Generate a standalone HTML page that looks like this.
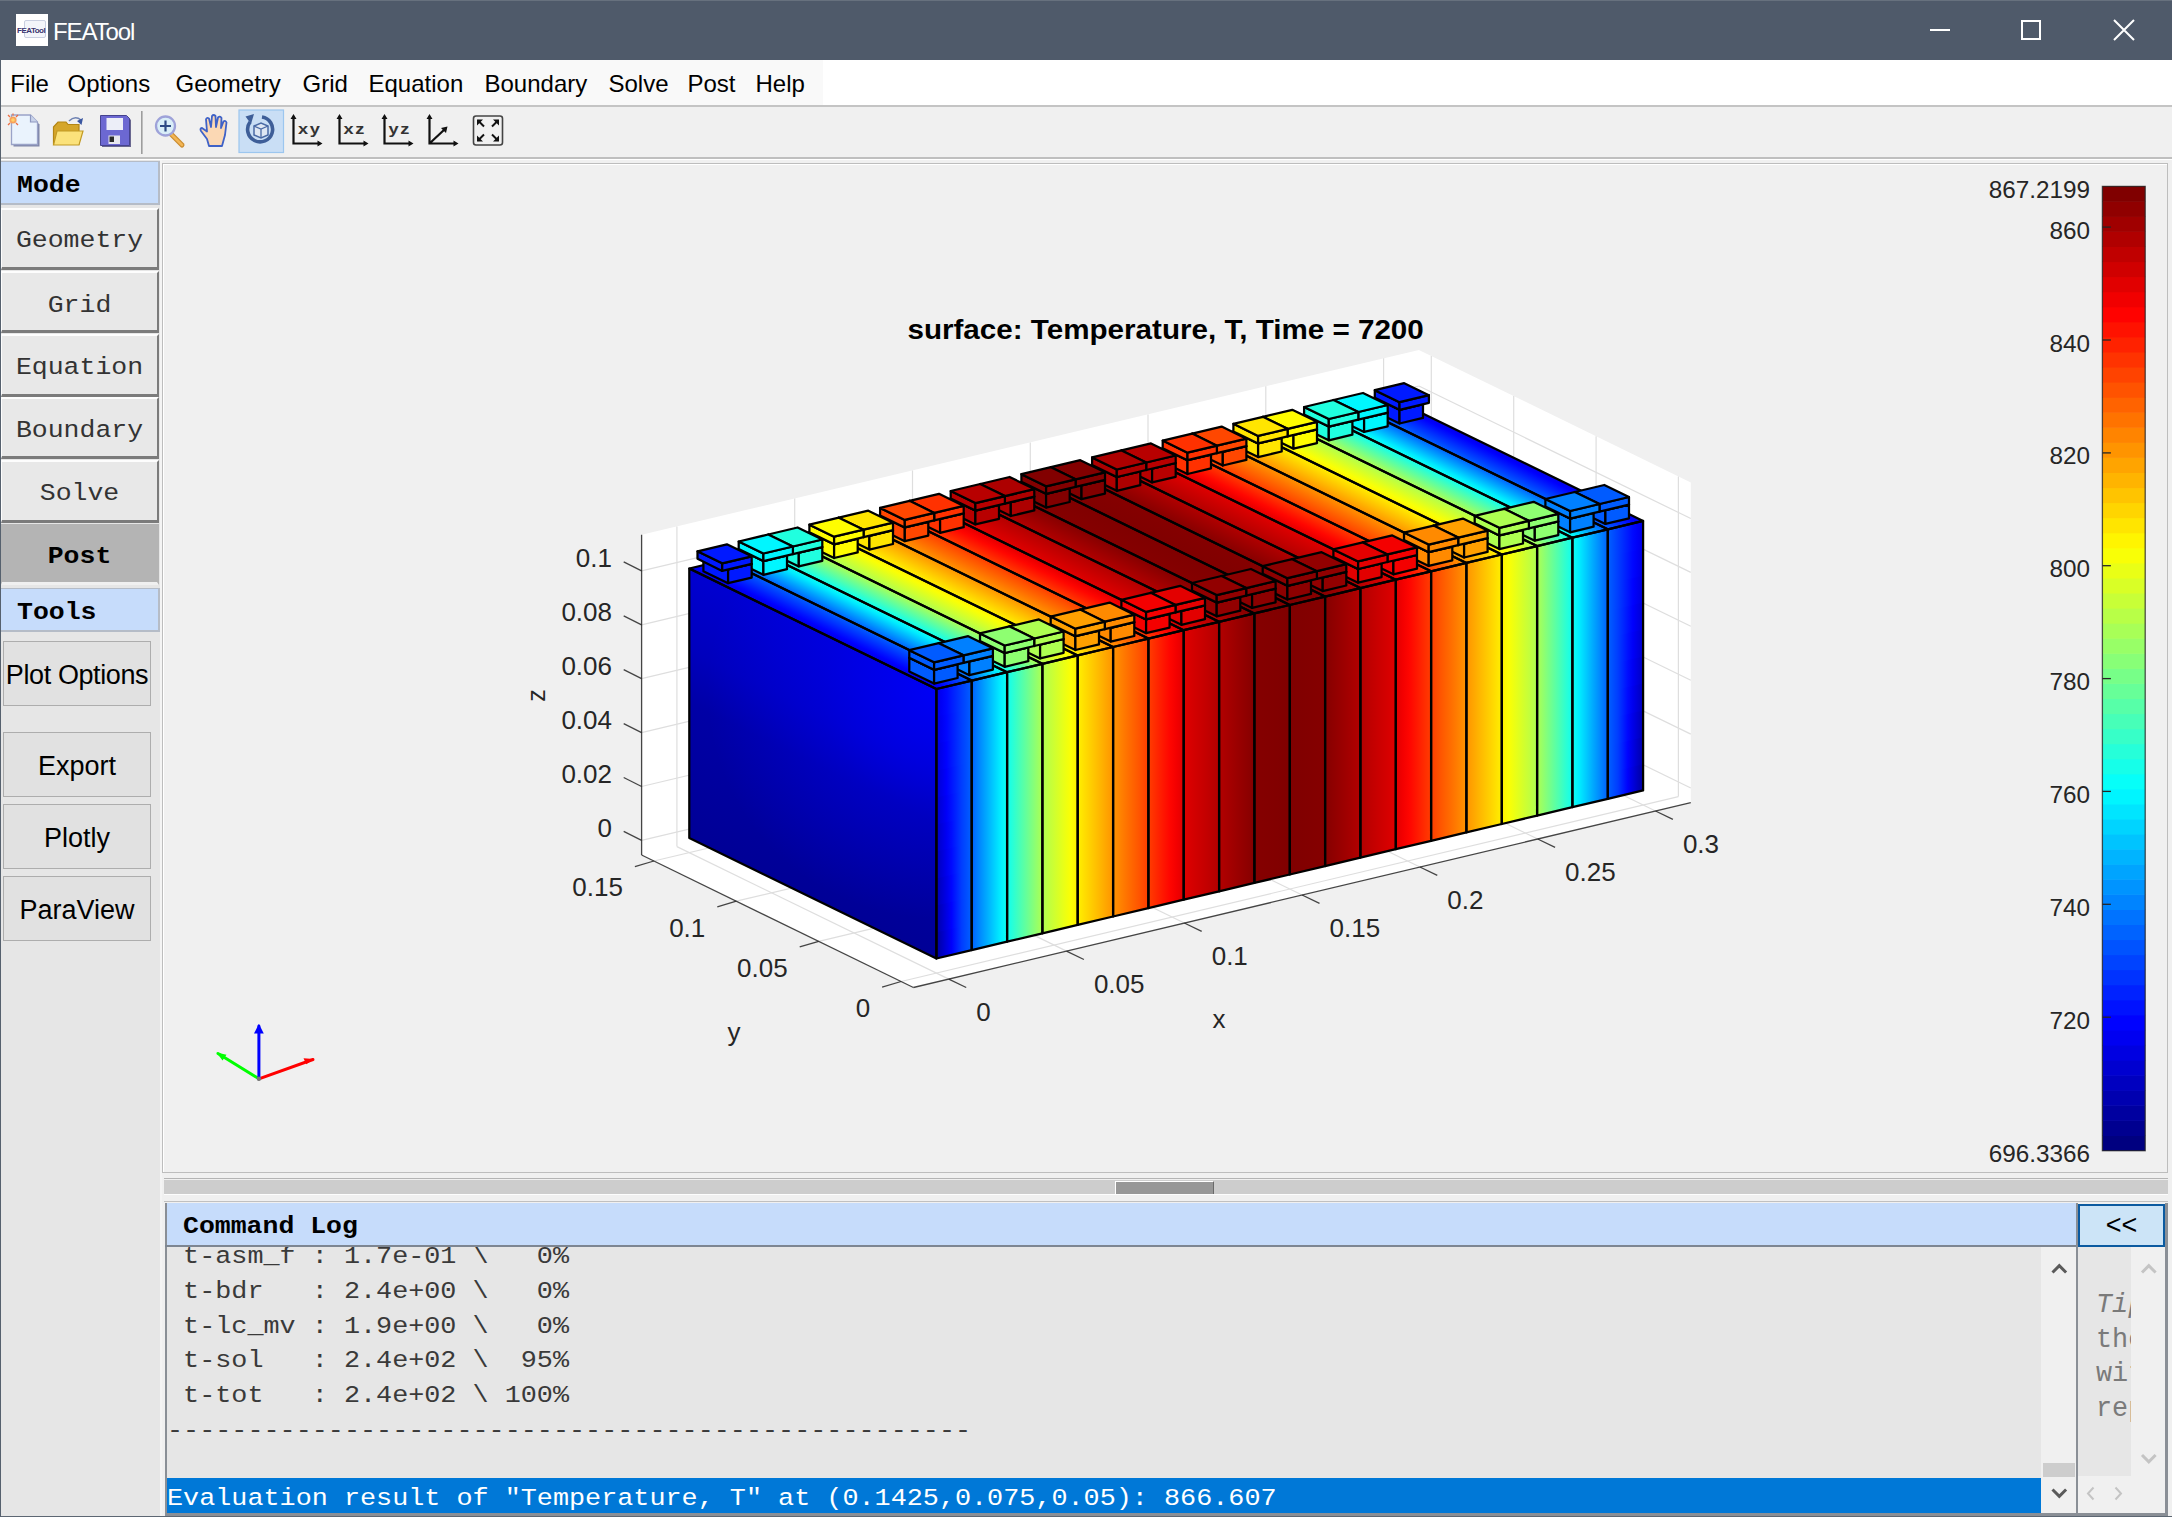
<!DOCTYPE html>
<html><head><meta charset="utf-8"><style>
html,body{margin:0;padding:0}
body{width:2172px;height:1517px;overflow:hidden;background:#f0f0f0;position:relative;font-family:"Liberation Sans",sans-serif}
.a{position:absolute}
.mono{font-family:"Liberation Mono",monospace}
.lg{left:0;font-size:26.8px;line-height:34.7px;height:34.7px;color:#3a3a3a;white-space:pre;transform:scaleY(0.87);transform-origin:0 24.5px}
#tb{left:0;top:0;width:2172px;height:60px;background:#4f5a6a;border-top:1px solid #67717e;box-sizing:border-box}
#menu{left:0;top:60px;width:2172px;height:45px;background:#fff}
#menuL{left:1px;top:60px;width:822px;height:45px;background:#f9f9f9}
.mi{top:69.5px;font-size:24px;color:#000;white-space:nowrap}
#menuLine{left:0;top:105px;width:2172px;height:2px;background:#c4c4c4}
#tool{left:0;top:107px;width:2172px;height:51px;background:#f0f0f0}
#toolLine{left:0;top:157px;width:2172px;height:2px;background:#bfbfbf}
#toolLine2{left:0;top:159px;width:2172px;height:1px;background:#fff}
#lp{left:0;top:160px;width:161px;height:1357px;background:#e6e6e6}
.hdr{background:#c6dcfb;box-sizing:border-box;border-top:1px solid #b5bcc7;border-right:2px solid #b5bcc7;border-bottom:2px solid #b5bcc7}
.htx{font-family:"Liberation Mono",monospace;font-weight:bold;font-size:26.5px;line-height:34px;color:#000;transform:scaleY(0.88);transform-origin:0 24.5px}
.mb{padding-top:3px;left:1px;width:158px;box-sizing:border-box;background:#e8e8e8;border-top:2px solid #fdfdfd;border-left:1px solid #fdfdfd;border-right:2px solid #7b7b7b;border-bottom:3px solid #7b7b7b;font-family:"Liberation Mono",monospace;font-size:26.5px;color:#333;text-align:center}
.sy{display:inline-block;transform:scaleY(0.88)}
.tbtn{padding-top:2px;left:3px;width:148px;box-sizing:border-box;background:#e1e1e1;border:1px solid #adadad;font-size:27px;color:#000;text-align:center}
#plotBox{left:162px;top:163px;width:2006px;height:1010px;box-sizing:border-box;border:1px solid #bdbdbd;background:#f0f0f0}
#plotIn{left:163px;top:164px;width:2004px;height:1px;background:#fff}
#plotIn2{left:163px;top:164px;width:1px;height:1008px;background:#fff}
#spl{left:164px;top:1178px;width:2004px;height:24px}
#log{left:164px;top:1202px;width:2004px;height:315px;background:#f0f0f0}
</style></head><body>
<div class="a" id="tb"></div>

<div class="a" style="left:16px;top:14px;width:32px;height:32px;background:#fff">
 <div class="a" style="left:8px;top:6px;width:20px;height:16px;border:1px solid #c9cfe0;border-radius:2px;background:#f3f5fa"></div>
 <div class="a" style="left:5px;top:15px;width:23px;height:2px;background:#fff"></div>
 <div class="a" style="left:1px;top:12px;font:bold 8px 'Liberation Sans';color:#3a3570;letter-spacing:-0.5px">FEATool</div>
</div>
<div class="a" style="left:53px;top:18px;font-size:24px;color:#fff;letter-spacing:-1.1px">FEATool</div>
<div class="a" style="left:1930px;top:29px;width:20px;height:2px;background:#fff"></div>
<div class="a" style="left:2021px;top:20px;width:20px;height:20px;box-sizing:border-box;border:2px solid #fff"></div>
<svg class="a" style="left:2112px;top:18px" width="24" height="24"><path d="M2 2 L22 22 M22 2 L2 22" stroke="#fff" stroke-width="2"/></svg>

<div class="a" id="menu"></div>
<div class="a" id="menuL"></div>
<div class="a mi" style="left:10.3px">File</div>
<div class="a mi" style="left:67.5px">Options</div>
<div class="a mi" style="left:175.5px">Geometry</div>
<div class="a mi" style="left:302.5px">Grid</div>
<div class="a mi" style="left:368.5px">Equation</div>
<div class="a mi" style="left:484.5px">Boundary</div>
<div class="a mi" style="left:608.5px">Solve</div>
<div class="a mi" style="left:687.5px">Post</div>
<div class="a mi" style="left:755.5px">Help</div>
<div class="a" id="menuLine"></div>
<div class="a" id="tool"></div>
<div class="a" id="toolLine"></div>
<div class="a" id="toolLine2"></div>

<svg class="a" style="left:0;top:106px" width="520" height="51" viewBox="0 106 520 51">
<!-- new -->
<g>
<path d="M13.5 117 L32 117 L39.5 124.5 L39.5 146.5 L13.5 146.5 Z" fill="#7f86a8"/>
<path d="M11.5 115 L30.5 115 L37.5 122 L37.5 144.5 L11.5 144.5 Z" fill="#eaf3fd" stroke="#9aa3c8" stroke-width="1.3"/>
<path d="M30.5 115 L30.5 122 L37.5 122" fill="#c9d3ea" stroke="#8e98c0" stroke-width="1.2"/>
<circle cx="13" cy="120" r="3.6" fill="#f7a05a"/><circle cx="13" cy="120" r="1.8" fill="#ffd26a"/>
<path d="M8 115 L10 117 M18 115 L16 117 M8 125 L10 123 M18 125 L16 123 M13 113.5 L13 115.5" stroke="#ec6d40" stroke-width="1.3"/>
</g>
<!-- open -->
<g>
<path d="M53.5 127 L58 122 L66 122 L68 124.5 L79 124.5 L79 144 L53.5 144 Z" fill="#d5a62b" stroke="#b38514" stroke-width="1.2"/>
<path d="M57 131 L83 131 L79 145 L53.5 145 Z" fill="#fbe27b" stroke="#c29a24" stroke-width="1.2"/>
<path d="M69 121 Q75 115 81 120" fill="none" stroke="#6f83b3" stroke-width="1.6"/>
<path d="M83 118 L81.5 125 L77 121 Z" fill="#3a56a0"/>
</g>
<!-- save -->
<g>
<path d="M102 117 L128 117 L131 120 L131 147 L102 147 Z" fill="#6a6890"/>
<path d="M100.5 115.5 L126.5 115.5 L129.5 118.5 L129.5 145.5 L100.5 145.5 Z" fill="#6c68d2" stroke="#45438e" stroke-width="1"/>
<rect x="106.5" y="118" width="16.5" height="12" fill="#eceef8"/>
<rect x="108.5" y="135.5" width="11.5" height="8.5" fill="#e6e6ee"/>
<rect x="109.5" y="136.5" width="4.5" height="5.5" fill="#2a2a2a"/>
</g>
<rect x="141" y="111" width="1.6" height="43" fill="#9d9d9d"/>
<!-- zoom -->
<g>
<line x1="171" y1="134" x2="182" y2="145" stroke="#c98a2d" stroke-width="5" stroke-linecap="round"/>
<line x1="171" y1="134" x2="182" y2="145" stroke="#f2b554" stroke-width="2.6" stroke-linecap="round"/>
<circle cx="165.5" cy="126" r="9.5" fill="#d9eef8" stroke="#9ea2d9" stroke-width="2.3"/>
<path d="M160 126 L171 126 M165.5 120.5 L165.5 131.5" stroke="#2d4a84" stroke-width="2.2"/>
</g>
<!-- hand -->
<g>
<path d="M209 146 L207 139 L201 131 Q199.5 128.5 202 128 L207 131.5 L206 119.5 Q206.5 117 209 118.5 L211 127 L212 116 Q213.5 114 215.5 116 L216 127 L218 117.5 Q220 115.5 221.5 118 L221 128 L223.5 121.5 Q225.5 120 226.5 122.5 L225 135 L222 146 Z" fill="#fbd8b4" stroke="#3f62c7" stroke-width="1.8" stroke-linejoin="round"/>
</g>
<!-- rotate (highlight) -->
<rect x="239" y="110" width="44.5" height="42.5" fill="#c9def5" stroke="#9cc6ef" stroke-width="1.2"/>
<g>
<path d="M250 122 A12.5 12.5 0 1 0 262 117" fill="none" stroke="#3e5e98" stroke-width="3.6"/>
<path d="M245.5 116.5 L254 114 L251 124 Z" fill="#3e5e98"/>
<path d="M254 126 L261 123 L268 126 L268 135 L261 138 L254 135 Z" fill="#dfe7f3" stroke="#4a6aa5" stroke-width="1.5"/>
<path d="M254 126 L261 129 L268 126 M261 129 L261 138" fill="none" stroke="#4a6aa5" stroke-width="1.3"/>
</g>
<!-- axis icons -->
<g stroke="#111" stroke-width="2.2" fill="none">
<path d="M293.5 117 L293.5 143.5 L320 143.5"/>
<path d="M339.5 117 L339.5 143.5 L366 143.5"/>
<path d="M384.5 117 L384.5 143.5 L411 143.5"/>
<path d="M429.5 117 L429.5 143.5 L456 143.5 M429.5 143.5 L445 129"/>
</g>
<g fill="#111">
<path d="M293.5 114 L290.5 119 L296.5 119 Z M322.5 143.5 L317.5 140.5 L317.5 146.5 Z"/>
<path d="M339.5 114 L336.5 119 L342.5 119 Z M368.5 143.5 L363.5 140.5 L363.5 146.5 Z"/>
<path d="M384.5 114 L381.5 119 L387.5 119 Z M413.5 143.5 L408.5 140.5 L408.5 146.5 Z"/>
<path d="M429.5 114 L426.5 119 L432.5 119 Z M458.5 143.5 L453.5 140.5 L453.5 146.5 Z M447.5 126.5 L441 128 L446 133 Z"/>
</g>
<g font-family="Liberation Sans" font-weight="bold" font-size="14" fill="#333" letter-spacing="1.2">
<text x="298" y="134.5" transform="translate(298 0) scale(1.3 1) translate(-298 0)">xy</text>
<text x="343.5" y="134.5" transform="translate(343.5 0) scale(1.3 1) translate(-343.5 0)">xz</text>
<text x="388.5" y="134.5" transform="translate(388.5 0) scale(1.3 1) translate(-388.5 0)">yz</text>
</g>
<!-- fit -->
<rect x="473.5" y="116" width="29" height="29" rx="2.5" fill="none" stroke="#444" stroke-width="1.6"/>
<g stroke="#111" stroke-width="2" fill="none">
<path d="M478 120.5 L484 126.5 M498 120.5 L492 126.5 M478 140.5 L484 134.5 M498 140.5 L492 134.5"/>
</g>
<g fill="#111">
<path d="M477 119.5 L483 119.5 L477 125.5 Z M499 119.5 L493 119.5 L499 125.5 Z M477 141.5 L483 141.5 L477 135.5 Z M499 141.5 L493 141.5 L499 135.5 Z"/>
</g>
</svg>

<div class="a" id="lp"></div>
<div class="a hdr" style="left:1px;top:161px;width:159px;height:44px"><div class="a htx" style="left:16px;top:6px">Mode</div></div>
<div class="a mb" style="top:208px;height:62px;line-height:57px"><span class="sy">Geometry</span></div>
<div class="a mb" style="top:271px;height:62px;line-height:60px"><span class="sy">Grid</span></div>
<div class="a mb" style="top:334px;height:63px;line-height:58px"><span class="sy">Equation</span></div>
<div class="a mb" style="top:397px;height:62px;line-height:59px"><span class="sy">Boundary</span></div>
<div class="a mb" style="top:460px;height:63px;line-height:58px"><span class="sy">Solve</span></div>
<div class="a mb" style="top:524px;height:61px;line-height:57px;background:#b4b4b4;border-color:#b4b4b4 #b4b4b4 #f0f0f0 #b4b4b4;font-weight:bold;color:#000"><span class="sy">Post</span></div>
<div class="a hdr" style="left:1px;top:588px;width:159px;height:44px"><div class="a htx" style="left:16px;top:6px">Tools</div></div>
<div class="a tbtn" style="top:641px;height:65px;line-height:63px;letter-spacing:-0.4px">Plot Options</div>
<div class="a tbtn" style="top:732px;height:65px;line-height:63px">Export</div>
<div class="a tbtn" style="top:804px;height:65px;line-height:63px">Plotly</div>
<div class="a tbtn" style="top:876px;height:65px;line-height:63px">ParaView</div>
<div class="a" style="left:160px;top:160px;width:2px;height:1357px;background:#f4f4f4"></div>

<div class="a" id="plotBox"></div>
<div class="a" id="plotIn"></div>
<div class="a" id="plotIn2"></div>
<svg class="a" style="left:0;top:0" width="2172" height="1517" viewBox="0 0 2172 1517"><defs><linearGradient id="g1" gradientUnits="userSpaceOnUse" x1="936.4" y1="689" x2="830.3" y2="906.8"><stop offset="0" stop-color="#0000d1"/><stop offset="0.3" stop-color="#0000bd"/><stop offset="0.5" stop-color="#0000a6"/><stop offset="1" stop-color="#000096"/></linearGradient><radialGradient id="g2" gradientUnits="userSpaceOnUse" cx="936.4" cy="689" r="230"><stop offset="0" stop-color="#0000fa" stop-opacity="0.9"/><stop offset="0.5" stop-color="#0000fa" stop-opacity="0.35"/><stop offset="1" stop-color="#0000fa" stop-opacity="0"/></radialGradient><linearGradient id="g3" gradientUnits="userSpaceOnUse" x1="936.4" y1="0" x2="971.7" y2="0"><stop offset="0" stop-color="#00009e"/><stop offset="0.143" stop-color="#0000bd"/><stop offset="0.286" stop-color="#0000dd"/><stop offset="0.429" stop-color="#0000fc"/><stop offset="0.571" stop-color="#001dff"/><stop offset="0.714" stop-color="#003cff"/><stop offset="0.857" stop-color="#004fff"/><stop offset="1" stop-color="#0061ff"/></linearGradient><linearGradient id="g4" gradientUnits="userSpaceOnUse" x1="936.4" y1="0" x2="971.7" y2="0"><stop offset="0" stop-color="#0000a8"/><stop offset="0.143" stop-color="#0000c5"/><stop offset="0.286" stop-color="#0000e3"/><stop offset="0.429" stop-color="#0001ff"/><stop offset="0.571" stop-color="#001fff"/><stop offset="0.714" stop-color="#003cff"/><stop offset="0.857" stop-color="#004fff"/><stop offset="1" stop-color="#0061ff"/></linearGradient><linearGradient id="g5" gradientUnits="userSpaceOnUse" x1="936.4" y1="0" x2="971.7" y2="0"><stop offset="0" stop-color="#0000b1"/><stop offset="0.143" stop-color="#0000cd"/><stop offset="0.286" stop-color="#0000e8"/><stop offset="0.429" stop-color="#0005ff"/><stop offset="0.571" stop-color="#0021ff"/><stop offset="0.714" stop-color="#003dff"/><stop offset="0.857" stop-color="#004fff"/><stop offset="1" stop-color="#0061ff"/></linearGradient><linearGradient id="g6" gradientUnits="userSpaceOnUse" x1="936.4" y1="0" x2="971.7" y2="0"><stop offset="0" stop-color="#0000ba"/><stop offset="0.143" stop-color="#0000d4"/><stop offset="0.286" stop-color="#0000ee"/><stop offset="0.429" stop-color="#0009ff"/><stop offset="0.571" stop-color="#0023ff"/><stop offset="0.714" stop-color="#003dff"/><stop offset="0.857" stop-color="#004fff"/><stop offset="1" stop-color="#0061ff"/></linearGradient><linearGradient id="g7" gradientUnits="userSpaceOnUse" x1="936.4" y1="0" x2="971.7" y2="0"><stop offset="0" stop-color="#0000c2"/><stop offset="0.143" stop-color="#0000db"/><stop offset="0.286" stop-color="#0000f3"/><stop offset="0.429" stop-color="#000cff"/><stop offset="0.571" stop-color="#0025ff"/><stop offset="0.714" stop-color="#003dff"/><stop offset="0.857" stop-color="#004fff"/><stop offset="1" stop-color="#0061ff"/></linearGradient><linearGradient id="g8" gradientUnits="userSpaceOnUse" x1="936.4" y1="0" x2="971.7" y2="0"><stop offset="0" stop-color="#0000ca"/><stop offset="0.143" stop-color="#0000e1"/><stop offset="0.286" stop-color="#0000f8"/><stop offset="0.429" stop-color="#0010ff"/><stop offset="0.571" stop-color="#0026ff"/><stop offset="0.714" stop-color="#003dff"/><stop offset="0.857" stop-color="#004fff"/><stop offset="1" stop-color="#0061ff"/></linearGradient><linearGradient id="g9" gradientUnits="userSpaceOnUse" x1="936.4" y1="0" x2="971.7" y2="0"><stop offset="0" stop-color="#0000d2"/><stop offset="0.143" stop-color="#0000e7"/><stop offset="0.286" stop-color="#0000fd"/><stop offset="0.429" stop-color="#0013ff"/><stop offset="0.571" stop-color="#0028ff"/><stop offset="0.714" stop-color="#003dff"/><stop offset="0.857" stop-color="#004fff"/><stop offset="1" stop-color="#0061ff"/></linearGradient><linearGradient id="g10" gradientUnits="userSpaceOnUse" x1="936.4" y1="0" x2="971.7" y2="0"><stop offset="0" stop-color="#0000d9"/><stop offset="0.143" stop-color="#0000ed"/><stop offset="0.286" stop-color="#0002ff"/><stop offset="0.429" stop-color="#0016ff"/><stop offset="0.571" stop-color="#002aff"/><stop offset="0.714" stop-color="#003eff"/><stop offset="0.857" stop-color="#004fff"/><stop offset="1" stop-color="#0061ff"/></linearGradient><linearGradient id="g11" gradientUnits="userSpaceOnUse" x1="936.4" y1="0" x2="971.7" y2="0"><stop offset="0" stop-color="#0000df"/><stop offset="0.143" stop-color="#0000f2"/><stop offset="0.286" stop-color="#0006ff"/><stop offset="0.429" stop-color="#0018ff"/><stop offset="0.571" stop-color="#002bff"/><stop offset="0.714" stop-color="#003eff"/><stop offset="0.857" stop-color="#004fff"/><stop offset="1" stop-color="#0061ff"/></linearGradient><linearGradient id="g12" gradientUnits="userSpaceOnUse" x1="936.4" y1="0" x2="971.7" y2="0"><stop offset="0" stop-color="#0000e4"/><stop offset="0.143" stop-color="#0000f6"/><stop offset="0.286" stop-color="#0008ff"/><stop offset="0.429" stop-color="#001aff"/><stop offset="0.571" stop-color="#002cff"/><stop offset="0.714" stop-color="#003eff"/><stop offset="0.857" stop-color="#004fff"/><stop offset="1" stop-color="#0061ff"/></linearGradient><linearGradient id="g13" gradientUnits="userSpaceOnUse" x1="936.4" y1="689" x2="946.5" y2="668.3"><stop offset="0" stop-color="#0000e6"/><stop offset="0.2" stop-color="#0000fe"/><stop offset="0.4" stop-color="#0017ff"/><stop offset="0.6" stop-color="#0030ff"/><stop offset="0.8" stop-color="#0048ff"/><stop offset="1" stop-color="#0061ff"/></linearGradient><linearGradient id="g14" gradientUnits="userSpaceOnUse" x1="971.7" y1="0" x2="1007.1" y2="0"><stop offset="0" stop-color="#0061ff"/><stop offset="0.2" stop-color="#0084ff"/><stop offset="0.4" stop-color="#00a6ff"/><stop offset="0.6" stop-color="#00c9ff"/><stop offset="0.8" stop-color="#00ecff"/><stop offset="1" stop-color="#0ffff0"/></linearGradient><linearGradient id="g15" gradientUnits="userSpaceOnUse" x1="971.7" y1="680.6" x2="981.8" y2="659.9"><stop offset="0" stop-color="#0061ff"/><stop offset="0.2" stop-color="#0084ff"/><stop offset="0.4" stop-color="#00a6ff"/><stop offset="0.6" stop-color="#00c9ff"/><stop offset="0.8" stop-color="#00ecff"/><stop offset="1" stop-color="#0ffff0"/></linearGradient><linearGradient id="g16" gradientUnits="userSpaceOnUse" x1="1007.1" y1="0" x2="1042.4" y2="0"><stop offset="0" stop-color="#0ffff0"/><stop offset="0.2" stop-color="#2fffd0"/><stop offset="0.4" stop-color="#4fffb0"/><stop offset="0.6" stop-color="#6eff91"/><stop offset="0.8" stop-color="#8eff71"/><stop offset="1" stop-color="#adff52"/></linearGradient><linearGradient id="g17" gradientUnits="userSpaceOnUse" x1="1007.1" y1="672.2" x2="1017.2" y2="651.5"><stop offset="0" stop-color="#0ffff0"/><stop offset="0.2" stop-color="#2fffd0"/><stop offset="0.4" stop-color="#4fffb0"/><stop offset="0.6" stop-color="#6eff91"/><stop offset="0.8" stop-color="#8eff71"/><stop offset="1" stop-color="#adff52"/></linearGradient><linearGradient id="g18" gradientUnits="userSpaceOnUse" x1="1042.4" y1="0" x2="1077.7" y2="0"><stop offset="0" stop-color="#adff52"/><stop offset="0.2" stop-color="#c1ff3e"/><stop offset="0.4" stop-color="#d4ff2b"/><stop offset="0.6" stop-color="#e8ff17"/><stop offset="0.8" stop-color="#fbff04"/><stop offset="1" stop-color="#fff000"/></linearGradient><linearGradient id="g19" gradientUnits="userSpaceOnUse" x1="1042.4" y1="663.8" x2="1052.5" y2="643.1"><stop offset="0" stop-color="#adff52"/><stop offset="0.2" stop-color="#c1ff3e"/><stop offset="0.4" stop-color="#d4ff2b"/><stop offset="0.6" stop-color="#e8ff17"/><stop offset="0.8" stop-color="#fbff04"/><stop offset="1" stop-color="#fff000"/></linearGradient><linearGradient id="g20" gradientUnits="userSpaceOnUse" x1="1077.7" y1="0" x2="1113.1" y2="0"><stop offset="0" stop-color="#fff000"/><stop offset="0.2" stop-color="#ffdd00"/><stop offset="0.4" stop-color="#ffcb00"/><stop offset="0.6" stop-color="#ffb900"/><stop offset="0.8" stop-color="#ffa600"/><stop offset="1" stop-color="#ff9400"/></linearGradient><linearGradient id="g21" gradientUnits="userSpaceOnUse" x1="1077.7" y1="655.4" x2="1087.8" y2="634.7"><stop offset="0" stop-color="#fff000"/><stop offset="0.2" stop-color="#ffdd00"/><stop offset="0.4" stop-color="#ffcb00"/><stop offset="0.6" stop-color="#ffb900"/><stop offset="0.8" stop-color="#ffa600"/><stop offset="1" stop-color="#ff9400"/></linearGradient><linearGradient id="g22" gradientUnits="userSpaceOnUse" x1="1113.1" y1="0" x2="1148.4" y2="0"><stop offset="0" stop-color="#ff9400"/><stop offset="0.2" stop-color="#ff8300"/><stop offset="0.4" stop-color="#ff7100"/><stop offset="0.6" stop-color="#ff6000"/><stop offset="0.8" stop-color="#ff4f00"/><stop offset="1" stop-color="#ff3d00"/></linearGradient><linearGradient id="g23" gradientUnits="userSpaceOnUse" x1="1113.1" y1="647" x2="1123.2" y2="626.3"><stop offset="0" stop-color="#ff9400"/><stop offset="0.2" stop-color="#ff8300"/><stop offset="0.4" stop-color="#ff7100"/><stop offset="0.6" stop-color="#ff6000"/><stop offset="0.8" stop-color="#ff4f00"/><stop offset="1" stop-color="#ff3d00"/></linearGradient><linearGradient id="g24" gradientUnits="userSpaceOnUse" x1="1148.4" y1="0" x2="1183.7" y2="0"><stop offset="0" stop-color="#ff3d00"/><stop offset="0.2" stop-color="#ff2b00"/><stop offset="0.4" stop-color="#ff1800"/><stop offset="0.6" stop-color="#ff0600"/><stop offset="0.8" stop-color="#f30000"/><stop offset="1" stop-color="#e00000"/></linearGradient><linearGradient id="g25" gradientUnits="userSpaceOnUse" x1="1148.4" y1="638.6" x2="1158.5" y2="617.9"><stop offset="0" stop-color="#ff3d00"/><stop offset="0.2" stop-color="#ff2b00"/><stop offset="0.4" stop-color="#ff1800"/><stop offset="0.6" stop-color="#ff0600"/><stop offset="0.8" stop-color="#f30000"/><stop offset="1" stop-color="#e00000"/></linearGradient><linearGradient id="g26" gradientUnits="userSpaceOnUse" x1="1183.7" y1="0" x2="1219.1" y2="0"><stop offset="0" stop-color="#e00000"/><stop offset="0.2" stop-color="#d70000"/><stop offset="0.4" stop-color="#ce0000"/><stop offset="0.6" stop-color="#c50000"/><stop offset="0.8" stop-color="#bc0000"/><stop offset="1" stop-color="#b30000"/></linearGradient><linearGradient id="g27" gradientUnits="userSpaceOnUse" x1="1183.7" y1="630.2" x2="1193.8" y2="609.5"><stop offset="0" stop-color="#e00000"/><stop offset="0.2" stop-color="#d70000"/><stop offset="0.4" stop-color="#ce0000"/><stop offset="0.6" stop-color="#c50000"/><stop offset="0.8" stop-color="#bc0000"/><stop offset="1" stop-color="#b30000"/></linearGradient><linearGradient id="g28" gradientUnits="userSpaceOnUse" x1="1219.1" y1="0" x2="1254.4" y2="0"><stop offset="0" stop-color="#b30000"/><stop offset="0.2" stop-color="#a90000"/><stop offset="0.4" stop-color="#a00000"/><stop offset="0.6" stop-color="#970000"/><stop offset="0.8" stop-color="#8e0000"/><stop offset="1" stop-color="#850000"/></linearGradient><linearGradient id="g29" gradientUnits="userSpaceOnUse" x1="1219.1" y1="621.8" x2="1229.2" y2="601.1"><stop offset="0" stop-color="#b30000"/><stop offset="0.2" stop-color="#a90000"/><stop offset="0.4" stop-color="#a00000"/><stop offset="0.6" stop-color="#970000"/><stop offset="0.8" stop-color="#8e0000"/><stop offset="1" stop-color="#850000"/></linearGradient><linearGradient id="g30" gradientUnits="userSpaceOnUse" x1="1254.4" y1="0" x2="1289.8" y2="0"><stop offset="0" stop-color="#850000"/><stop offset="0.2" stop-color="#840000"/><stop offset="0.4" stop-color="#830000"/><stop offset="0.6" stop-color="#820000"/><stop offset="0.8" stop-color="#810000"/><stop offset="1" stop-color="#800000"/></linearGradient><linearGradient id="g31" gradientUnits="userSpaceOnUse" x1="1254.4" y1="613.4" x2="1264.5" y2="592.7"><stop offset="0" stop-color="#850000"/><stop offset="0.2" stop-color="#840000"/><stop offset="0.4" stop-color="#830000"/><stop offset="0.6" stop-color="#820000"/><stop offset="0.8" stop-color="#810000"/><stop offset="1" stop-color="#800000"/></linearGradient><linearGradient id="g32" gradientUnits="userSpaceOnUse" x1="1289.8" y1="0" x2="1325.1" y2="0"><stop offset="0" stop-color="#800000"/><stop offset="0.2" stop-color="#810000"/><stop offset="0.4" stop-color="#820000"/><stop offset="0.6" stop-color="#830000"/><stop offset="0.8" stop-color="#840000"/><stop offset="1" stop-color="#850000"/></linearGradient><linearGradient id="g33" gradientUnits="userSpaceOnUse" x1="1289.8" y1="605" x2="1299.8" y2="584.2"><stop offset="0" stop-color="#800000"/><stop offset="0.2" stop-color="#810000"/><stop offset="0.4" stop-color="#820000"/><stop offset="0.6" stop-color="#830000"/><stop offset="0.8" stop-color="#840000"/><stop offset="1" stop-color="#850000"/></linearGradient><linearGradient id="g34" gradientUnits="userSpaceOnUse" x1="1325.1" y1="0" x2="1360.4" y2="0"><stop offset="0" stop-color="#850000"/><stop offset="0.2" stop-color="#8e0000"/><stop offset="0.4" stop-color="#970000"/><stop offset="0.6" stop-color="#a00000"/><stop offset="0.8" stop-color="#a90000"/><stop offset="1" stop-color="#b30000"/></linearGradient><linearGradient id="g35" gradientUnits="userSpaceOnUse" x1="1325.1" y1="596.6" x2="1335.2" y2="575.8"><stop offset="0" stop-color="#850000"/><stop offset="0.2" stop-color="#8e0000"/><stop offset="0.4" stop-color="#970000"/><stop offset="0.6" stop-color="#a00000"/><stop offset="0.8" stop-color="#a90000"/><stop offset="1" stop-color="#b30000"/></linearGradient><linearGradient id="g36" gradientUnits="userSpaceOnUse" x1="1360.4" y1="0" x2="1395.8" y2="0"><stop offset="0" stop-color="#b30000"/><stop offset="0.2" stop-color="#bc0000"/><stop offset="0.4" stop-color="#c50000"/><stop offset="0.6" stop-color="#ce0000"/><stop offset="0.8" stop-color="#d70000"/><stop offset="1" stop-color="#e00000"/></linearGradient><linearGradient id="g37" gradientUnits="userSpaceOnUse" x1="1360.4" y1="588.1" x2="1370.5" y2="567.4"><stop offset="0" stop-color="#b30000"/><stop offset="0.2" stop-color="#bc0000"/><stop offset="0.4" stop-color="#c50000"/><stop offset="0.6" stop-color="#ce0000"/><stop offset="0.8" stop-color="#d70000"/><stop offset="1" stop-color="#e00000"/></linearGradient><linearGradient id="g38" gradientUnits="userSpaceOnUse" x1="1395.8" y1="0" x2="1431.1" y2="0"><stop offset="0" stop-color="#e00000"/><stop offset="0.2" stop-color="#f30000"/><stop offset="0.4" stop-color="#ff0600"/><stop offset="0.6" stop-color="#ff1800"/><stop offset="0.8" stop-color="#ff2b00"/><stop offset="1" stop-color="#ff3d00"/></linearGradient><linearGradient id="g39" gradientUnits="userSpaceOnUse" x1="1395.8" y1="579.7" x2="1405.9" y2="559"><stop offset="0" stop-color="#e00000"/><stop offset="0.2" stop-color="#f30000"/><stop offset="0.4" stop-color="#ff0600"/><stop offset="0.6" stop-color="#ff1800"/><stop offset="0.8" stop-color="#ff2b00"/><stop offset="1" stop-color="#ff3d00"/></linearGradient><linearGradient id="g40" gradientUnits="userSpaceOnUse" x1="1431.1" y1="0" x2="1466.4" y2="0"><stop offset="0" stop-color="#ff3d00"/><stop offset="0.2" stop-color="#ff4f00"/><stop offset="0.4" stop-color="#ff6000"/><stop offset="0.6" stop-color="#ff7100"/><stop offset="0.8" stop-color="#ff8300"/><stop offset="1" stop-color="#ff9400"/></linearGradient><linearGradient id="g41" gradientUnits="userSpaceOnUse" x1="1431.1" y1="571.3" x2="1441.2" y2="550.6"><stop offset="0" stop-color="#ff3d00"/><stop offset="0.2" stop-color="#ff4f00"/><stop offset="0.4" stop-color="#ff6000"/><stop offset="0.6" stop-color="#ff7100"/><stop offset="0.8" stop-color="#ff8300"/><stop offset="1" stop-color="#ff9400"/></linearGradient><linearGradient id="g42" gradientUnits="userSpaceOnUse" x1="1466.4" y1="0" x2="1501.8" y2="0"><stop offset="0" stop-color="#ff9400"/><stop offset="0.2" stop-color="#ffa600"/><stop offset="0.4" stop-color="#ffb900"/><stop offset="0.6" stop-color="#ffcb00"/><stop offset="0.8" stop-color="#ffdd00"/><stop offset="1" stop-color="#fff000"/></linearGradient><linearGradient id="g43" gradientUnits="userSpaceOnUse" x1="1466.4" y1="562.9" x2="1476.5" y2="542.2"><stop offset="0" stop-color="#ff9400"/><stop offset="0.2" stop-color="#ffa600"/><stop offset="0.4" stop-color="#ffb900"/><stop offset="0.6" stop-color="#ffcb00"/><stop offset="0.8" stop-color="#ffdd00"/><stop offset="1" stop-color="#fff000"/></linearGradient><linearGradient id="g44" gradientUnits="userSpaceOnUse" x1="1501.8" y1="0" x2="1537.1" y2="0"><stop offset="0" stop-color="#fff000"/><stop offset="0.2" stop-color="#fbff04"/><stop offset="0.4" stop-color="#e8ff17"/><stop offset="0.6" stop-color="#d4ff2b"/><stop offset="0.8" stop-color="#c1ff3e"/><stop offset="1" stop-color="#adff52"/></linearGradient><linearGradient id="g45" gradientUnits="userSpaceOnUse" x1="1501.8" y1="554.5" x2="1511.9" y2="533.8"><stop offset="0" stop-color="#fff000"/><stop offset="0.2" stop-color="#fbff04"/><stop offset="0.4" stop-color="#e8ff17"/><stop offset="0.6" stop-color="#d4ff2b"/><stop offset="0.8" stop-color="#c1ff3e"/><stop offset="1" stop-color="#adff52"/></linearGradient><linearGradient id="g46" gradientUnits="userSpaceOnUse" x1="1537.1" y1="0" x2="1572.4" y2="0"><stop offset="0" stop-color="#adff52"/><stop offset="0.2" stop-color="#8eff71"/><stop offset="0.4" stop-color="#6eff91"/><stop offset="0.6" stop-color="#4fffb0"/><stop offset="0.8" stop-color="#2fffd0"/><stop offset="1" stop-color="#0ffff0"/></linearGradient><linearGradient id="g47" gradientUnits="userSpaceOnUse" x1="1537.1" y1="546.1" x2="1547.2" y2="525.4"><stop offset="0" stop-color="#adff52"/><stop offset="0.2" stop-color="#8eff71"/><stop offset="0.4" stop-color="#6eff91"/><stop offset="0.6" stop-color="#4fffb0"/><stop offset="0.8" stop-color="#2fffd0"/><stop offset="1" stop-color="#0ffff0"/></linearGradient><linearGradient id="g48" gradientUnits="userSpaceOnUse" x1="1572.4" y1="0" x2="1607.8" y2="0"><stop offset="0" stop-color="#0ffff0"/><stop offset="0.2" stop-color="#00ecff"/><stop offset="0.4" stop-color="#00c9ff"/><stop offset="0.6" stop-color="#00a6ff"/><stop offset="0.8" stop-color="#0084ff"/><stop offset="1" stop-color="#0061ff"/></linearGradient><linearGradient id="g49" gradientUnits="userSpaceOnUse" x1="1572.4" y1="537.7" x2="1582.5" y2="517"><stop offset="0" stop-color="#0ffff0"/><stop offset="0.2" stop-color="#00ecff"/><stop offset="0.4" stop-color="#00c9ff"/><stop offset="0.6" stop-color="#00a6ff"/><stop offset="0.8" stop-color="#0084ff"/><stop offset="1" stop-color="#0061ff"/></linearGradient><linearGradient id="g50" gradientUnits="userSpaceOnUse" x1="1607.8" y1="0" x2="1643.1" y2="0"><stop offset="0" stop-color="#0061ff"/><stop offset="0.143" stop-color="#004fff"/><stop offset="0.286" stop-color="#003cff"/><stop offset="0.429" stop-color="#001dff"/><stop offset="0.571" stop-color="#0000fc"/><stop offset="0.714" stop-color="#0000dd"/><stop offset="0.857" stop-color="#0000bd"/><stop offset="1" stop-color="#00009e"/></linearGradient><linearGradient id="g51" gradientUnits="userSpaceOnUse" x1="1607.8" y1="0" x2="1643.1" y2="0"><stop offset="0" stop-color="#0061ff"/><stop offset="0.143" stop-color="#004fff"/><stop offset="0.286" stop-color="#003cff"/><stop offset="0.429" stop-color="#001fff"/><stop offset="0.571" stop-color="#0001ff"/><stop offset="0.714" stop-color="#0000e3"/><stop offset="0.857" stop-color="#0000c5"/><stop offset="1" stop-color="#0000a8"/></linearGradient><linearGradient id="g52" gradientUnits="userSpaceOnUse" x1="1607.8" y1="0" x2="1643.1" y2="0"><stop offset="0" stop-color="#0061ff"/><stop offset="0.143" stop-color="#004fff"/><stop offset="0.286" stop-color="#003dff"/><stop offset="0.429" stop-color="#0021ff"/><stop offset="0.571" stop-color="#0005ff"/><stop offset="0.714" stop-color="#0000e8"/><stop offset="0.857" stop-color="#0000cd"/><stop offset="1" stop-color="#0000b1"/></linearGradient><linearGradient id="g53" gradientUnits="userSpaceOnUse" x1="1607.8" y1="0" x2="1643.1" y2="0"><stop offset="0" stop-color="#0061ff"/><stop offset="0.143" stop-color="#004fff"/><stop offset="0.286" stop-color="#003dff"/><stop offset="0.429" stop-color="#0023ff"/><stop offset="0.571" stop-color="#0009ff"/><stop offset="0.714" stop-color="#0000ee"/><stop offset="0.857" stop-color="#0000d4"/><stop offset="1" stop-color="#0000ba"/></linearGradient><linearGradient id="g54" gradientUnits="userSpaceOnUse" x1="1607.8" y1="0" x2="1643.1" y2="0"><stop offset="0" stop-color="#0061ff"/><stop offset="0.143" stop-color="#004fff"/><stop offset="0.286" stop-color="#003dff"/><stop offset="0.429" stop-color="#0025ff"/><stop offset="0.571" stop-color="#000cff"/><stop offset="0.714" stop-color="#0000f3"/><stop offset="0.857" stop-color="#0000db"/><stop offset="1" stop-color="#0000c2"/></linearGradient><linearGradient id="g55" gradientUnits="userSpaceOnUse" x1="1607.8" y1="0" x2="1643.1" y2="0"><stop offset="0" stop-color="#0061ff"/><stop offset="0.143" stop-color="#004fff"/><stop offset="0.286" stop-color="#003dff"/><stop offset="0.429" stop-color="#0026ff"/><stop offset="0.571" stop-color="#0010ff"/><stop offset="0.714" stop-color="#0000f8"/><stop offset="0.857" stop-color="#0000e1"/><stop offset="1" stop-color="#0000ca"/></linearGradient><linearGradient id="g56" gradientUnits="userSpaceOnUse" x1="1607.8" y1="0" x2="1643.1" y2="0"><stop offset="0" stop-color="#0061ff"/><stop offset="0.143" stop-color="#004fff"/><stop offset="0.286" stop-color="#003dff"/><stop offset="0.429" stop-color="#0028ff"/><stop offset="0.571" stop-color="#0013ff"/><stop offset="0.714" stop-color="#0000fd"/><stop offset="0.857" stop-color="#0000e7"/><stop offset="1" stop-color="#0000d2"/></linearGradient><linearGradient id="g57" gradientUnits="userSpaceOnUse" x1="1607.8" y1="0" x2="1643.1" y2="0"><stop offset="0" stop-color="#0061ff"/><stop offset="0.143" stop-color="#004fff"/><stop offset="0.286" stop-color="#003eff"/><stop offset="0.429" stop-color="#002aff"/><stop offset="0.571" stop-color="#0016ff"/><stop offset="0.714" stop-color="#0002ff"/><stop offset="0.857" stop-color="#0000ed"/><stop offset="1" stop-color="#0000d9"/></linearGradient><linearGradient id="g58" gradientUnits="userSpaceOnUse" x1="1607.8" y1="0" x2="1643.1" y2="0"><stop offset="0" stop-color="#0061ff"/><stop offset="0.143" stop-color="#004fff"/><stop offset="0.286" stop-color="#003eff"/><stop offset="0.429" stop-color="#002bff"/><stop offset="0.571" stop-color="#0018ff"/><stop offset="0.714" stop-color="#0006ff"/><stop offset="0.857" stop-color="#0000f2"/><stop offset="1" stop-color="#0000df"/></linearGradient><linearGradient id="g59" gradientUnits="userSpaceOnUse" x1="1607.8" y1="0" x2="1643.1" y2="0"><stop offset="0" stop-color="#0061ff"/><stop offset="0.143" stop-color="#004fff"/><stop offset="0.286" stop-color="#003eff"/><stop offset="0.429" stop-color="#002cff"/><stop offset="0.571" stop-color="#001aff"/><stop offset="0.714" stop-color="#0008ff"/><stop offset="0.857" stop-color="#0000f6"/><stop offset="1" stop-color="#0000e4"/></linearGradient><linearGradient id="g60" gradientUnits="userSpaceOnUse" x1="1607.8" y1="529.3" x2="1617.9" y2="508.6"><stop offset="0" stop-color="#0061ff"/><stop offset="0.2" stop-color="#0048ff"/><stop offset="0.4" stop-color="#0030ff"/><stop offset="0.6" stop-color="#0017ff"/><stop offset="0.8" stop-color="#0000fe"/><stop offset="1" stop-color="#0000e6"/></linearGradient></defs><polygon points="913.4,987.5 1690.8,802.6 1690.8,482.4 1418.9,349.9 641.6,534.8 641.6,855" fill="#fff"/>
<g stroke="#dedede" stroke-width="1.2" fill="none"><line x1="676.9" y1="846.6" x2="676.9" y2="526.4"/><line x1="948.8" y1="979.1" x2="676.9" y2="846.6"/><line x1="794.7" y1="818.6" x2="794.7" y2="498.4"/><line x1="1066.5" y1="951.1" x2="794.7" y2="818.6"/><line x1="912.5" y1="790.6" x2="912.5" y2="470.4"/><line x1="1184.3" y1="923" x2="912.5" y2="790.6"/><line x1="1030.3" y1="762.5" x2="1030.3" y2="442.4"/><line x1="1302.1" y1="895" x2="1030.3" y2="762.5"/><line x1="1148" y1="734.5" x2="1148" y2="414.4"/><line x1="1419.9" y1="867" x2="1148" y2="734.5"/><line x1="1265.8" y1="706.5" x2="1265.8" y2="386.3"/><line x1="1537.7" y1="839" x2="1265.8" y2="706.5"/><line x1="1383.6" y1="678.5" x2="1383.6" y2="358.3"/><line x1="1655.5" y1="811" x2="1383.6" y2="678.5"/><line x1="1678.4" y1="796.6" x2="1678.4" y2="476.4"/><line x1="901.1" y1="981.5" x2="1678.4" y2="796.6"/><line x1="1596.1" y1="756.4" x2="1596.1" y2="436.2"/><line x1="818.7" y1="941.3" x2="1596.1" y2="756.4"/><line x1="1513.7" y1="716.3" x2="1513.7" y2="396.1"/><line x1="736.3" y1="901.2" x2="1513.7" y2="716.3"/><line x1="1431.3" y1="676.1" x2="1431.3" y2="355.9"/><line x1="653.9" y1="861" x2="1431.3" y2="676.1"/><line x1="641.6" y1="840.4" x2="1418.9" y2="655.5"/><line x1="1690.8" y1="788" x2="1418.9" y2="655.5"/><line x1="641.6" y1="786.5" x2="1418.9" y2="601.6"/><line x1="1690.8" y1="734.1" x2="1418.9" y2="601.6"/><line x1="641.6" y1="732.6" x2="1418.9" y2="547.7"/><line x1="1690.8" y1="680.2" x2="1418.9" y2="547.7"/><line x1="641.6" y1="678.7" x2="1418.9" y2="493.8"/><line x1="1690.8" y1="626.3" x2="1418.9" y2="493.8"/><line x1="641.6" y1="624.8" x2="1418.9" y2="439.9"/><line x1="1690.8" y1="572.4" x2="1418.9" y2="439.9"/><line x1="641.6" y1="570.9" x2="1418.9" y2="386"/><line x1="1690.8" y1="518.5" x2="1418.9" y2="386"/></g>
<g stroke="#262626" stroke-width="1.3" fill="none" stroke-opacity="0.85"><line x1="641.6" y1="855" x2="641.6" y2="534.8"/><line x1="913.4" y1="987.5" x2="641.6" y2="855"/><line x1="913.4" y1="987.5" x2="1690.8" y2="802.6"/><line x1="641.6" y1="840.4" x2="623.7" y2="831.4"/><line x1="641.6" y1="786.5" x2="623.7" y2="777.5"/><line x1="641.6" y1="732.6" x2="623.7" y2="723.6"/><line x1="641.6" y1="678.7" x2="623.7" y2="669.7"/><line x1="641.6" y1="624.8" x2="623.7" y2="615.8"/><line x1="641.6" y1="570.9" x2="623.7" y2="561.9"/><line x1="948.8" y1="979.1" x2="966.2" y2="987.5"/><line x1="1066.5" y1="951.1" x2="1083.9" y2="959.5"/><line x1="1184.3" y1="923" x2="1201.7" y2="931.4"/><line x1="1302.1" y1="895" x2="1319.5" y2="903.4"/><line x1="1419.9" y1="867" x2="1437.3" y2="875.4"/><line x1="1537.7" y1="839" x2="1555.1" y2="847.4"/><line x1="1655.5" y1="811" x2="1672.9" y2="819.4"/><line x1="901.1" y1="981.5" x2="882.1" y2="987.1"/><line x1="818.7" y1="941.3" x2="799.7" y2="946.9"/><line x1="736.3" y1="901.2" x2="717.3" y2="906.8"/><line x1="653.9" y1="861" x2="634.9" y2="866.6"/></g>
<g font-family="Liberation Sans" fill="#262626"><text x="612" y="836.6" text-anchor="end" font-size="26">0</text><text x="612" y="782.7" text-anchor="end" font-size="26">0.02</text><text x="612" y="728.8" text-anchor="end" font-size="26">0.04</text><text x="612" y="674.9" text-anchor="end" font-size="26">0.06</text><text x="612" y="621" text-anchor="end" font-size="26">0.08</text><text x="612" y="567.1" text-anchor="end" font-size="26">0.1</text><text x="976.2" y="1021.1" text-anchor="start" font-size="26">0</text><text x="1093.9" y="993.1" text-anchor="start" font-size="26">0.05</text><text x="1211.7" y="965" text-anchor="start" font-size="26">0.1</text><text x="1329.5" y="937" text-anchor="start" font-size="26">0.15</text><text x="1447.3" y="909" text-anchor="start" font-size="26">0.2</text><text x="1565.1" y="881" text-anchor="start" font-size="26">0.25</text><text x="1682.9" y="853" text-anchor="start" font-size="26">0.3</text><text x="870.1" y="1016.8" text-anchor="end" font-size="26">0</text><text x="787.7" y="976.6" text-anchor="end" font-size="26">0.05</text><text x="705.3" y="936.5" text-anchor="end" font-size="26">0.1</text><text x="622.9" y="896.3" text-anchor="end" font-size="26">0.15</text><text x="1219" y="1027.5" text-anchor="middle" font-size="26">x</text><text x="734" y="1041" text-anchor="middle" font-size="26">y</text><text x="0" y="0" font-size="25" text-anchor="middle" transform="translate(545,695.4) rotate(-90)">z</text></g>
<polygon points="936.4,958.5 689.3,838 689.3,568.5 936.4,689" fill="url(#g1)"/>
<polygon points="936.4,958.5 689.3,838 689.3,568.5 936.4,689" fill="url(#g2)"/>
<polygon points="936.4,958.5 971.7,950.1 971.7,922.3 936.4,930.7" fill="url(#g3)"/>
<polygon points="936.4,932.4 971.7,924 971.7,895.4 936.4,903.8" fill="url(#g4)"/>
<polygon points="936.4,905.4 971.7,897 971.7,868.4 936.4,876.8" fill="url(#g5)"/>
<polygon points="936.4,878.5 971.7,870.1 971.7,841.5 936.4,849.9" fill="url(#g6)"/>
<polygon points="936.4,851.5 971.7,843.1 971.7,814.5 936.4,822.9" fill="url(#g7)"/>
<polygon points="936.4,824.6 971.7,816.2 971.7,787.6 936.4,796" fill="url(#g8)"/>
<polygon points="936.4,797.6 971.7,789.2 971.7,760.6 936.4,769" fill="url(#g9)"/>
<polygon points="936.4,770.7 971.7,762.3 971.7,733.7 936.4,742.1" fill="url(#g10)"/>
<polygon points="936.4,743.7 971.7,735.3 971.7,706.7 936.4,715.1" fill="url(#g11)"/>
<polygon points="936.4,716.8 971.7,708.4 971.7,680.6 936.4,689" fill="url(#g12)"/>
<polygon points="936.4,689 971.7,680.6 724.6,560.1 689.3,568.5" fill="url(#g13)"/>
<polygon points="971.7,950.1 1007.1,941.7 1007.1,672.2 971.7,680.6" fill="url(#g14)"/>
<polygon points="971.7,680.6 1007.1,672.2 759.9,551.7 724.6,560.1" fill="url(#g15)"/>
<polygon points="1007.1,941.7 1042.4,933.3 1042.4,663.8 1007.1,672.2" fill="url(#g16)"/>
<polygon points="1007.1,672.2 1042.4,663.8 795.3,543.3 759.9,551.7" fill="url(#g17)"/>
<polygon points="1042.4,933.3 1077.7,924.9 1077.7,655.4 1042.4,663.8" fill="url(#g18)"/>
<polygon points="1042.4,663.8 1077.7,655.4 830.6,534.9 795.3,543.3" fill="url(#g19)"/>
<polygon points="1077.7,924.9 1113.1,916.5 1113.1,647 1077.7,655.4" fill="url(#g20)"/>
<polygon points="1077.7,655.4 1113.1,647 865.9,526.5 830.6,534.9" fill="url(#g21)"/>
<polygon points="1113.1,916.5 1148.4,908.1 1148.4,638.6 1113.1,647" fill="url(#g22)"/>
<polygon points="1113.1,647 1148.4,638.6 901.3,518.1 865.9,526.5" fill="url(#g23)"/>
<polygon points="1148.4,908.1 1183.7,899.7 1183.7,630.2 1148.4,638.6" fill="url(#g24)"/>
<polygon points="1148.4,638.6 1183.7,630.2 936.6,509.7 901.3,518.1" fill="url(#g25)"/>
<polygon points="1183.7,899.7 1219.1,891.3 1219.1,621.8 1183.7,630.2" fill="url(#g26)"/>
<polygon points="1183.7,630.2 1219.1,621.8 971.9,501.3 936.6,509.7" fill="url(#g27)"/>
<polygon points="1219.1,891.3 1254.4,882.9 1254.4,613.4 1219.1,621.8" fill="url(#g28)"/>
<polygon points="1219.1,621.8 1254.4,613.4 1007.3,492.9 971.9,501.3" fill="url(#g29)"/>
<polygon points="1254.4,882.9 1289.8,874.5 1289.8,605 1254.4,613.4" fill="url(#g30)"/>
<polygon points="1254.4,613.4 1289.8,605 1042.6,484.5 1007.3,492.9" fill="url(#g31)"/>
<polygon points="1289.8,874.5 1325.1,866.1 1325.1,596.6 1289.8,605" fill="url(#g32)"/>
<polygon points="1289.8,605 1325.1,596.6 1078,476.1 1042.6,484.5" fill="url(#g33)"/>
<polygon points="1325.1,866.1 1360.4,857.6 1360.4,588.1 1325.1,596.6" fill="url(#g34)"/>
<polygon points="1325.1,596.6 1360.4,588.1 1113.3,467.7 1078,476.1" fill="url(#g35)"/>
<polygon points="1360.4,857.6 1395.8,849.2 1395.8,579.7 1360.4,588.1" fill="url(#g36)"/>
<polygon points="1360.4,588.1 1395.8,579.7 1148.6,459.3 1113.3,467.7" fill="url(#g37)"/>
<polygon points="1395.8,849.2 1431.1,840.8 1431.1,571.3 1395.8,579.7" fill="url(#g38)"/>
<polygon points="1395.8,579.7 1431.1,571.3 1184,450.9 1148.6,459.3" fill="url(#g39)"/>
<polygon points="1431.1,840.8 1466.4,832.4 1466.4,562.9 1431.1,571.3" fill="url(#g40)"/>
<polygon points="1431.1,571.3 1466.4,562.9 1219.3,442.5 1184,450.9" fill="url(#g41)"/>
<polygon points="1466.4,832.4 1501.8,824 1501.8,554.5 1466.4,562.9" fill="url(#g42)"/>
<polygon points="1466.4,562.9 1501.8,554.5 1254.6,434.1 1219.3,442.5" fill="url(#g43)"/>
<polygon points="1501.8,824 1537.1,815.6 1537.1,546.1 1501.8,554.5" fill="url(#g44)"/>
<polygon points="1501.8,554.5 1537.1,546.1 1290,425.7 1254.6,434.1" fill="url(#g45)"/>
<polygon points="1537.1,815.6 1572.4,807.2 1572.4,537.7 1537.1,546.1" fill="url(#g46)"/>
<polygon points="1537.1,546.1 1572.4,537.7 1325.3,417.3 1290,425.7" fill="url(#g47)"/>
<polygon points="1572.4,807.2 1607.8,798.8 1607.8,529.3 1572.4,537.7" fill="url(#g48)"/>
<polygon points="1572.4,537.7 1607.8,529.3 1360.6,408.9 1325.3,417.3" fill="url(#g49)"/>
<polygon points="1607.8,798.8 1643.1,790.4 1643.1,762.7 1607.8,771.1" fill="url(#g50)"/>
<polygon points="1607.8,772.7 1643.1,764.3 1643.1,735.7 1607.8,744.1" fill="url(#g51)"/>
<polygon points="1607.8,745.7 1643.1,737.3 1643.1,708.8 1607.8,717.2" fill="url(#g52)"/>
<polygon points="1607.8,718.8 1643.1,710.4 1643.1,681.8 1607.8,690.2" fill="url(#g53)"/>
<polygon points="1607.8,691.8 1643.1,683.4 1643.1,654.9 1607.8,663.3" fill="url(#g54)"/>
<polygon points="1607.8,664.9 1643.1,656.5 1643.1,627.9 1607.8,636.3" fill="url(#g55)"/>
<polygon points="1607.8,637.9 1643.1,629.5 1643.1,601 1607.8,609.4" fill="url(#g56)"/>
<polygon points="1607.8,611 1643.1,602.6 1643.1,574 1607.8,582.4" fill="url(#g57)"/>
<polygon points="1607.8,584 1643.1,575.6 1643.1,547.1 1607.8,555.5" fill="url(#g58)"/>
<polygon points="1607.8,557.1 1643.1,548.7 1643.1,520.9 1607.8,529.3" fill="url(#g59)"/>
<polygon points="1607.8,529.3 1643.1,520.9 1396,400.5 1360.6,408.9" fill="url(#g60)"/>
<g fill="none" stroke="#000" stroke-width="2.25" stroke-linejoin="round"><polygon points="936.4,958.5 971.7,950.1 971.7,680.6 936.4,689"/><polygon points="936.4,689 971.7,680.6 724.6,560.1 689.3,568.5"/><polygon points="971.7,950.1 1007.1,941.7 1007.1,672.2 971.7,680.6"/><polygon points="971.7,680.6 1007.1,672.2 759.9,551.7 724.6,560.1"/><polygon points="1007.1,941.7 1042.4,933.3 1042.4,663.8 1007.1,672.2"/><polygon points="1007.1,672.2 1042.4,663.8 795.3,543.3 759.9,551.7"/><polygon points="1042.4,933.3 1077.7,924.9 1077.7,655.4 1042.4,663.8"/><polygon points="1042.4,663.8 1077.7,655.4 830.6,534.9 795.3,543.3"/><polygon points="1077.7,924.9 1113.1,916.5 1113.1,647 1077.7,655.4"/><polygon points="1077.7,655.4 1113.1,647 865.9,526.5 830.6,534.9"/><polygon points="1113.1,916.5 1148.4,908.1 1148.4,638.6 1113.1,647"/><polygon points="1113.1,647 1148.4,638.6 901.3,518.1 865.9,526.5"/><polygon points="1148.4,908.1 1183.7,899.7 1183.7,630.2 1148.4,638.6"/><polygon points="1148.4,638.6 1183.7,630.2 936.6,509.7 901.3,518.1"/><polygon points="1183.7,899.7 1219.1,891.3 1219.1,621.8 1183.7,630.2"/><polygon points="1183.7,630.2 1219.1,621.8 971.9,501.3 936.6,509.7"/><polygon points="1219.1,891.3 1254.4,882.9 1254.4,613.4 1219.1,621.8"/><polygon points="1219.1,621.8 1254.4,613.4 1007.3,492.9 971.9,501.3"/><polygon points="1254.4,882.9 1289.8,874.5 1289.8,605 1254.4,613.4"/><polygon points="1254.4,613.4 1289.8,605 1042.6,484.5 1007.3,492.9"/><polygon points="1289.8,874.5 1325.1,866.1 1325.1,596.6 1289.8,605"/><polygon points="1289.8,605 1325.1,596.6 1078,476.1 1042.6,484.5"/><polygon points="1325.1,866.1 1360.4,857.6 1360.4,588.1 1325.1,596.6"/><polygon points="1325.1,596.6 1360.4,588.1 1113.3,467.7 1078,476.1"/><polygon points="1360.4,857.6 1395.8,849.2 1395.8,579.7 1360.4,588.1"/><polygon points="1360.4,588.1 1395.8,579.7 1148.6,459.3 1113.3,467.7"/><polygon points="1395.8,849.2 1431.1,840.8 1431.1,571.3 1395.8,579.7"/><polygon points="1395.8,579.7 1431.1,571.3 1184,450.9 1148.6,459.3"/><polygon points="1431.1,840.8 1466.4,832.4 1466.4,562.9 1431.1,571.3"/><polygon points="1431.1,571.3 1466.4,562.9 1219.3,442.5 1184,450.9"/><polygon points="1466.4,832.4 1501.8,824 1501.8,554.5 1466.4,562.9"/><polygon points="1466.4,562.9 1501.8,554.5 1254.6,434.1 1219.3,442.5"/><polygon points="1501.8,824 1537.1,815.6 1537.1,546.1 1501.8,554.5"/><polygon points="1501.8,554.5 1537.1,546.1 1290,425.7 1254.6,434.1"/><polygon points="1537.1,815.6 1572.4,807.2 1572.4,537.7 1537.1,546.1"/><polygon points="1537.1,546.1 1572.4,537.7 1325.3,417.3 1290,425.7"/><polygon points="1572.4,807.2 1607.8,798.8 1607.8,529.3 1572.4,537.7"/><polygon points="1572.4,537.7 1607.8,529.3 1360.6,408.9 1325.3,417.3"/><polygon points="1607.8,798.8 1643.1,790.4 1643.1,520.9 1607.8,529.3"/><polygon points="1607.8,529.3 1643.1,520.9 1396,400.5 1360.6,408.9"/><polygon points="936.4,958.5 689.3,838 689.3,568.5 936.4,689"/></g>
<g fill="#001aff" stroke="#000" stroke-width="2.25" stroke-linejoin="round"><polygon points="1399.5,423.5 1374.8,411.5 1374.8,397.7 1399.5,409.8"/><polygon points="1399.5,423.5 1423,417.9 1423,404.2 1399.5,409.8"/><polygon points="1399.5,409.8 1423,404.2 1398.3,392.1 1374.8,397.7"/></g>
<g fill="#001aff" stroke="#000" stroke-width="2.25" stroke-linejoin="round"><polygon points="1399.5,409.8 1374.8,397.7 1374.8,390.2 1399.5,402.2"/><polygon points="1399.5,409.8 1428.9,402.8 1428.9,395.2 1399.5,402.2"/><polygon points="1399.5,402.2 1428.9,395.2 1404.2,383.2 1374.8,390.2"/></g>
<g fill="#00f6ff" stroke="#000" stroke-width="2.25" stroke-linejoin="round"><polygon points="1364.1,431.9 1339.4,419.9 1339.4,406.1 1364.1,418.2"/><polygon points="1364.1,431.9 1387.7,426.3 1387.7,412.6 1364.1,418.2"/><polygon points="1364.1,418.2 1387.7,412.6 1363,400.5 1339.4,406.1"/></g>
<g fill="#00f6ff" stroke="#000" stroke-width="2.25" stroke-linejoin="round"><polygon points="1358.3,419.6 1333.5,407.5 1333.5,400 1358.3,412"/><polygon points="1358.3,419.6 1387.7,412.6 1387.7,405 1358.3,412"/><polygon points="1358.3,412 1387.7,405 1363,393 1333.5,400"/></g>
<g fill="#20ffdf" stroke="#000" stroke-width="2.25" stroke-linejoin="round"><polygon points="1328.8,440.3 1304.1,428.3 1304.1,414.5 1328.8,426.6"/><polygon points="1328.8,440.3 1352.4,434.7 1352.4,421 1328.8,426.6"/><polygon points="1328.8,426.6 1352.4,421 1327.6,408.9 1304.1,414.5"/></g>
<g fill="#20ffdf" stroke="#000" stroke-width="2.25" stroke-linejoin="round"><polygon points="1328.8,426.6 1304.1,414.5 1304.1,407 1328.8,419"/><polygon points="1328.8,426.6 1358.3,419.6 1358.3,412 1328.8,419"/><polygon points="1328.8,419 1358.3,412 1333.5,400 1304.1,407"/></g>
<g fill="#fffd00" stroke="#000" stroke-width="2.25" stroke-linejoin="round"><polygon points="1293.5,448.7 1268.8,436.7 1268.8,422.9 1293.5,435"/><polygon points="1293.5,448.7 1317,443.1 1317,429.4 1293.5,435"/><polygon points="1293.5,435 1317,429.4 1292.3,417.3 1268.8,422.9"/></g>
<g fill="#fffd00" stroke="#000" stroke-width="2.25" stroke-linejoin="round"><polygon points="1287.6,436.4 1262.9,424.3 1262.9,416.8 1287.6,428.8"/><polygon points="1287.6,436.4 1317,429.4 1317,421.8 1287.6,428.8"/><polygon points="1287.6,428.8 1317,421.8 1292.3,409.8 1262.9,416.8"/></g>
<g fill="#ffe500" stroke="#000" stroke-width="2.25" stroke-linejoin="round"><polygon points="1258.1,457.1 1233.4,445.1 1233.4,431.4 1258.1,443.4"/><polygon points="1258.1,457.1 1281.7,451.5 1281.7,437.8 1258.1,443.4"/><polygon points="1258.1,443.4 1281.7,437.8 1257,425.7 1233.4,431.4"/></g>
<g fill="#ffe500" stroke="#000" stroke-width="2.25" stroke-linejoin="round"><polygon points="1258.1,443.4 1233.4,431.4 1233.4,423.8 1258.1,435.9"/><polygon points="1258.1,443.4 1287.6,436.4 1287.6,428.8 1258.1,435.9"/><polygon points="1258.1,435.9 1287.6,428.8 1262.9,416.8 1233.4,423.8"/></g>
<g fill="#ff4700" stroke="#000" stroke-width="2.25" stroke-linejoin="round"><polygon points="1222.8,465.5 1198.1,453.5 1198.1,439.8 1222.8,451.8"/><polygon points="1222.8,465.5 1246.4,459.9 1246.4,446.2 1222.8,451.8"/><polygon points="1222.8,451.8 1246.4,446.2 1221.6,434.2 1198.1,439.8"/></g>
<g fill="#ff4700" stroke="#000" stroke-width="2.25" stroke-linejoin="round"><polygon points="1216.9,453.2 1192.2,441.2 1192.2,433.6 1216.9,445.7"/><polygon points="1216.9,453.2 1246.4,446.2 1246.4,438.7 1216.9,445.7"/><polygon points="1216.9,445.7 1246.4,438.7 1221.6,426.6 1192.2,433.6"/></g>
<g fill="#ff3100" stroke="#000" stroke-width="2.25" stroke-linejoin="round"><polygon points="1187.5,474 1162.7,461.9 1162.7,448.2 1187.5,460.2"/><polygon points="1187.5,474 1211,468.3 1211,454.6 1187.5,460.2"/><polygon points="1187.5,460.2 1211,454.6 1186.3,442.6 1162.7,448.2"/></g>
<g fill="#ff3100" stroke="#000" stroke-width="2.25" stroke-linejoin="round"><polygon points="1187.5,460.2 1162.7,448.2 1162.7,440.6 1187.5,452.7"/><polygon points="1187.5,460.2 1216.9,453.2 1216.9,445.7 1187.5,452.7"/><polygon points="1187.5,452.7 1216.9,445.7 1192.2,433.6 1162.7,440.6"/></g>
<g fill="#b80000" stroke="#000" stroke-width="2.25" stroke-linejoin="round"><polygon points="1152.1,482.4 1127.4,470.3 1127.4,456.6 1152.1,468.6"/><polygon points="1152.1,482.4 1175.7,476.8 1175.7,463 1152.1,468.6"/><polygon points="1152.1,468.6 1175.7,463 1151,451 1127.4,456.6"/></g>
<g fill="#b80000" stroke="#000" stroke-width="2.25" stroke-linejoin="round"><polygon points="1146.2,470 1121.5,458 1121.5,450.4 1146.2,462.5"/><polygon points="1146.2,470 1175.7,463 1175.7,455.5 1146.2,462.5"/><polygon points="1146.2,462.5 1175.7,455.5 1151,443.4 1121.5,450.4"/></g>
<g fill="#ad0000" stroke="#000" stroke-width="2.25" stroke-linejoin="round"><polygon points="1116.8,490.8 1092.1,478.7 1092.1,465 1116.8,477"/><polygon points="1116.8,490.8 1140.3,485.2 1140.3,471.4 1116.8,477"/><polygon points="1116.8,477 1140.3,471.4 1115.6,459.4 1092.1,465"/></g>
<g fill="#ad0000" stroke="#000" stroke-width="2.25" stroke-linejoin="round"><polygon points="1116.8,477 1092.1,465 1092.1,457.4 1116.8,469.5"/><polygon points="1116.8,477 1146.2,470 1146.2,462.5 1116.8,469.5"/><polygon points="1116.8,469.5 1146.2,462.5 1121.5,450.4 1092.1,457.4"/></g>
<g fill="#820000" stroke="#000" stroke-width="2.25" stroke-linejoin="round"><polygon points="1081.5,499.2 1056.7,487.1 1056.7,473.4 1081.5,485.4"/><polygon points="1081.5,499.2 1105,493.6 1105,479.8 1081.5,485.4"/><polygon points="1081.5,485.4 1105,479.8 1080.3,467.8 1056.7,473.4"/></g>
<g fill="#820000" stroke="#000" stroke-width="2.25" stroke-linejoin="round"><polygon points="1075.6,486.8 1050.9,474.8 1050.9,467.2 1075.6,479.3"/><polygon points="1075.6,486.8 1105,479.8 1105,472.3 1075.6,479.3"/><polygon points="1075.6,479.3 1105,472.3 1080.3,460.2 1050.9,467.2"/></g>
<g fill="#820000" stroke="#000" stroke-width="2.25" stroke-linejoin="round"><polygon points="1046.1,507.6 1021.4,495.5 1021.4,481.8 1046.1,493.8"/><polygon points="1046.1,507.6 1069.7,502 1069.7,488.2 1046.1,493.8"/><polygon points="1046.1,493.8 1069.7,488.2 1045,476.2 1021.4,481.8"/></g>
<g fill="#820000" stroke="#000" stroke-width="2.25" stroke-linejoin="round"><polygon points="1046.1,493.8 1021.4,481.8 1021.4,474.2 1046.1,486.3"/><polygon points="1046.1,493.8 1075.6,486.8 1075.6,479.3 1046.1,486.3"/><polygon points="1046.1,486.3 1075.6,479.3 1050.9,467.2 1021.4,474.2"/></g>
<g fill="#ad0000" stroke="#000" stroke-width="2.25" stroke-linejoin="round"><polygon points="1010.8,516 986.1,503.9 986.1,490.2 1010.8,502.2"/><polygon points="1010.8,516 1034.3,510.4 1034.3,496.6 1010.8,502.2"/><polygon points="1010.8,502.2 1034.3,496.6 1009.6,484.6 986.1,490.2"/></g>
<g fill="#ad0000" stroke="#000" stroke-width="2.25" stroke-linejoin="round"><polygon points="1004.9,503.6 980.2,491.6 980.2,484 1004.9,496.1"/><polygon points="1004.9,503.6 1034.3,496.6 1034.3,489.1 1004.9,496.1"/><polygon points="1004.9,496.1 1034.3,489.1 1009.6,477 980.2,484"/></g>
<g fill="#005bff" stroke="#000" stroke-width="2.25" stroke-linejoin="round"><polygon points="1605.4,523.9 1580.7,511.9 1580.7,498.1 1605.4,510.2"/><polygon points="1605.4,523.9 1629,518.3 1629,504.6 1605.4,510.2"/><polygon points="1605.4,510.2 1629,504.6 1604.3,492.5 1580.7,498.1"/></g>
<g fill="#b80000" stroke="#000" stroke-width="2.25" stroke-linejoin="round"><polygon points="975.4,524.4 950.7,512.3 950.7,498.6 975.4,510.6"/><polygon points="975.4,524.4 999,518.8 999,505 975.4,510.6"/><polygon points="975.4,510.6 999,505 974.3,493 950.7,498.6"/></g>
<g fill="#b80000" stroke="#000" stroke-width="2.25" stroke-linejoin="round"><polygon points="975.4,510.6 950.7,498.6 950.7,491 975.4,503.1"/><polygon points="975.4,510.6 1004.9,503.6 1004.9,496.1 975.4,503.1"/><polygon points="975.4,503.1 1004.9,496.1 980.2,484 950.7,491"/></g>
<g fill="#005bff" stroke="#000" stroke-width="2.25" stroke-linejoin="round"><polygon points="1599.5,511.6 1574.8,499.5 1574.8,492 1599.5,504"/><polygon points="1599.5,511.6 1629,504.6 1629,497 1599.5,504"/><polygon points="1599.5,504 1629,497 1604.3,485 1574.8,492"/></g>
<g fill="#0080ff" stroke="#000" stroke-width="2.25" stroke-linejoin="round"><polygon points="1570.1,532.3 1545.4,520.3 1545.4,506.5 1570.1,518.6"/><polygon points="1570.1,532.3 1593.6,526.7 1593.6,513 1570.1,518.6"/><polygon points="1570.1,518.6 1593.6,513 1568.9,500.9 1545.4,506.5"/></g>
<g fill="#0080ff" stroke="#000" stroke-width="2.25" stroke-linejoin="round"><polygon points="1570.1,518.6 1545.4,506.5 1545.4,499 1570.1,511"/><polygon points="1570.1,518.6 1599.5,511.6 1599.5,504 1570.1,511"/><polygon points="1570.1,511 1599.5,504 1574.8,492 1545.4,499"/></g>
<g fill="#ff3100" stroke="#000" stroke-width="2.25" stroke-linejoin="round"><polygon points="940.1,532.8 915.4,520.7 915.4,507 940.1,519"/><polygon points="940.1,532.8 963.7,527.2 963.7,513.4 940.1,519"/><polygon points="940.1,519 963.7,513.4 939,501.4 915.4,507"/></g>
<g fill="#ff3100" stroke="#000" stroke-width="2.25" stroke-linejoin="round"><polygon points="934.2,520.4 909.5,508.4 909.5,500.8 934.2,512.9"/><polygon points="934.2,520.4 963.7,513.4 963.7,505.9 934.2,512.9"/><polygon points="934.2,512.9 963.7,505.9 939,493.8 909.5,500.8"/></g>
<g fill="#8eff71" stroke="#000" stroke-width="2.25" stroke-linejoin="round"><polygon points="1534.8,540.7 1510,528.7 1510,514.9 1534.8,527"/><polygon points="1534.8,540.7 1558.3,535.1 1558.3,521.4 1534.8,527"/><polygon points="1534.8,527 1558.3,521.4 1533.6,509.3 1510,514.9"/></g>
<g fill="#ff4700" stroke="#000" stroke-width="2.25" stroke-linejoin="round"><polygon points="904.8,541.2 880.1,529.1 880.1,515.4 904.8,527.4"/><polygon points="904.8,541.2 928.3,535.6 928.3,521.8 904.8,527.4"/><polygon points="904.8,527.4 928.3,521.8 903.6,509.8 880.1,515.4"/></g>
<g fill="#ff4700" stroke="#000" stroke-width="2.25" stroke-linejoin="round"><polygon points="904.8,527.4 880.1,515.4 880.1,507.9 904.8,519.9"/><polygon points="904.8,527.4 934.2,520.4 934.2,512.9 904.8,519.9"/><polygon points="904.8,519.9 934.2,512.9 909.5,500.8 880.1,507.9"/></g>
<g fill="#8eff71" stroke="#000" stroke-width="2.25" stroke-linejoin="round"><polygon points="1528.9,528.4 1504.2,516.3 1504.2,508.8 1528.9,520.8"/><polygon points="1528.9,528.4 1558.3,521.4 1558.3,513.8 1528.9,520.8"/><polygon points="1528.9,520.8 1558.3,513.8 1533.6,501.8 1504.2,508.8"/></g>
<g fill="#aeff51" stroke="#000" stroke-width="2.25" stroke-linejoin="round"><polygon points="1499.4,549.1 1474.7,537.1 1474.7,523.3 1499.4,535.4"/><polygon points="1499.4,549.1 1523,543.5 1523,529.8 1499.4,535.4"/><polygon points="1499.4,535.4 1523,529.8 1498.3,517.7 1474.7,523.3"/></g>
<g fill="#aeff51" stroke="#000" stroke-width="2.25" stroke-linejoin="round"><polygon points="1499.4,535.4 1474.7,523.3 1474.7,515.8 1499.4,527.8"/><polygon points="1499.4,535.4 1528.9,528.4 1528.9,520.8 1499.4,527.8"/><polygon points="1499.4,527.8 1528.9,520.8 1504.2,508.8 1474.7,515.8"/></g>
<g fill="#ffe500" stroke="#000" stroke-width="2.25" stroke-linejoin="round"><polygon points="869.4,549.6 844.7,537.5 844.7,523.8 869.4,535.8"/><polygon points="869.4,549.6 893,544 893,530.2 869.4,535.8"/><polygon points="869.4,535.8 893,530.2 868.3,518.2 844.7,523.8"/></g>
<g fill="#ffe500" stroke="#000" stroke-width="2.25" stroke-linejoin="round"><polygon points="863.6,537.2 838.8,525.2 838.8,517.7 863.6,529.7"/><polygon points="863.6,537.2 893,530.2 893,522.7 863.6,529.7"/><polygon points="863.6,529.7 893,522.7 868.3,510.7 838.8,517.7"/></g>
<g fill="#ffa000" stroke="#000" stroke-width="2.25" stroke-linejoin="round"><polygon points="1464.1,557.5 1439.4,545.5 1439.4,531.7 1464.1,543.8"/><polygon points="1464.1,557.5 1487.6,551.9 1487.6,538.2 1464.1,543.8"/><polygon points="1464.1,543.8 1487.6,538.2 1462.9,526.1 1439.4,531.7"/></g>
<g fill="#fffd00" stroke="#000" stroke-width="2.25" stroke-linejoin="round"><polygon points="834.1,558 809.4,546 809.4,532.2 834.1,544.3"/><polygon points="834.1,558 857.7,552.4 857.7,538.6 834.1,544.3"/><polygon points="834.1,544.3 857.7,538.6 833,526.6 809.4,532.2"/></g>
<g fill="#fffd00" stroke="#000" stroke-width="2.25" stroke-linejoin="round"><polygon points="834.1,544.3 809.4,532.2 809.4,524.7 834.1,536.7"/><polygon points="834.1,544.3 863.6,537.2 863.6,529.7 834.1,536.7"/><polygon points="834.1,536.7 863.6,529.7 838.8,517.7 809.4,524.7"/></g>
<g fill="#ffa000" stroke="#000" stroke-width="2.25" stroke-linejoin="round"><polygon points="1458.2,545.2 1433.5,533.1 1433.5,525.6 1458.2,537.6"/><polygon points="1458.2,545.2 1487.6,538.2 1487.6,530.6 1458.2,537.6"/><polygon points="1458.2,537.6 1487.6,530.6 1462.9,518.6 1433.5,525.6"/></g>
<g fill="#ff8a00" stroke="#000" stroke-width="2.25" stroke-linejoin="round"><polygon points="1428.7,565.9 1404,553.9 1404,540.1 1428.7,552.2"/><polygon points="1428.7,565.9 1452.3,560.3 1452.3,546.6 1428.7,552.2"/><polygon points="1428.7,552.2 1452.3,546.6 1427.6,534.5 1404,540.1"/></g>
<g fill="#ff8a00" stroke="#000" stroke-width="2.25" stroke-linejoin="round"><polygon points="1428.7,552.2 1404,540.1 1404,532.6 1428.7,544.6"/><polygon points="1428.7,552.2 1458.2,545.2 1458.2,537.6 1428.7,544.6"/><polygon points="1428.7,544.6 1458.2,537.6 1433.5,525.6 1404,532.6"/></g>
<g fill="#20ffdf" stroke="#000" stroke-width="2.25" stroke-linejoin="round"><polygon points="798.8,566.4 774.1,554.4 774.1,540.6 798.8,552.7"/><polygon points="798.8,566.4 822.3,560.8 822.3,547.1 798.8,552.7"/><polygon points="798.8,552.7 822.3,547.1 797.6,535 774.1,540.6"/></g>
<g fill="#20ffdf" stroke="#000" stroke-width="2.25" stroke-linejoin="round"><polygon points="792.9,554.1 768.2,542 768.2,534.5 792.9,546.5"/><polygon points="792.9,554.1 822.3,547.1 822.3,539.5 792.9,546.5"/><polygon points="792.9,546.5 822.3,539.5 797.6,527.5 768.2,534.5"/></g>
<g fill="#f40000" stroke="#000" stroke-width="2.25" stroke-linejoin="round"><polygon points="1393.4,574.3 1368.7,562.3 1368.7,548.5 1393.4,560.6"/><polygon points="1393.4,574.3 1417,568.7 1417,555 1393.4,560.6"/><polygon points="1393.4,560.6 1417,555 1392.3,542.9 1368.7,548.5"/></g>
<g fill="#00f6ff" stroke="#000" stroke-width="2.25" stroke-linejoin="round"><polygon points="763.4,574.8 738.7,562.8 738.7,549 763.4,561.1"/><polygon points="763.4,574.8 787,569.2 787,555.5 763.4,561.1"/><polygon points="763.4,561.1 787,555.5 762.3,543.4 738.7,549"/></g>
<g fill="#00f6ff" stroke="#000" stroke-width="2.25" stroke-linejoin="round"><polygon points="763.4,561.1 738.7,549 738.7,541.5 763.4,553.5"/><polygon points="763.4,561.1 792.9,554.1 792.9,546.5 763.4,553.5"/><polygon points="763.4,553.5 792.9,546.5 768.2,534.5 738.7,541.5"/></g>
<g fill="#f40000" stroke="#000" stroke-width="2.25" stroke-linejoin="round"><polygon points="1387.5,562 1362.8,549.9 1362.8,542.4 1387.5,554.4"/><polygon points="1387.5,562 1417,555 1417,547.4 1387.5,554.4"/><polygon points="1387.5,554.4 1417,547.4 1392.3,535.4 1362.8,542.4"/></g>
<g fill="#e30000" stroke="#000" stroke-width="2.25" stroke-linejoin="round"><polygon points="1358.1,582.7 1333.4,570.7 1333.4,556.9 1358.1,569"/><polygon points="1358.1,582.7 1381.6,577.1 1381.6,563.4 1358.1,569"/><polygon points="1358.1,569 1381.6,563.4 1356.9,551.3 1333.4,556.9"/></g>
<g fill="#e30000" stroke="#000" stroke-width="2.25" stroke-linejoin="round"><polygon points="1358.1,569 1333.4,556.9 1333.4,549.4 1358.1,561.4"/><polygon points="1358.1,569 1387.5,562 1387.5,554.4 1358.1,561.4"/><polygon points="1358.1,561.4 1387.5,554.4 1362.8,542.4 1333.4,549.4"/></g>
<g fill="#0019ff" stroke="#000" stroke-width="2.25" stroke-linejoin="round"><polygon points="728.1,583.2 703.4,571.2 703.4,557.4 728.1,569.5"/><polygon points="728.1,583.2 751.7,577.6 751.7,563.9 728.1,569.5"/><polygon points="728.1,569.5 751.7,563.9 726.9,551.8 703.4,557.4"/></g>
<g fill="#0019ff" stroke="#000" stroke-width="2.25" stroke-linejoin="round"><polygon points="722.2,570.9 697.5,558.8 697.5,551.3 722.2,563.3"/><polygon points="722.2,570.9 751.7,563.9 751.7,556.3 722.2,563.3"/><polygon points="722.2,563.3 751.7,556.3 726.9,544.3 697.5,551.3"/></g>
<g fill="#920000" stroke="#000" stroke-width="2.25" stroke-linejoin="round"><polygon points="1322.7,591.1 1298,579.1 1298,565.3 1322.7,577.4"/><polygon points="1322.7,591.1 1346.3,585.5 1346.3,571.8 1322.7,577.4"/><polygon points="1322.7,577.4 1346.3,571.8 1321.6,559.7 1298,565.3"/></g>
<g fill="#920000" stroke="#000" stroke-width="2.25" stroke-linejoin="round"><polygon points="1316.9,578.8 1292.1,566.7 1292.1,559.2 1316.9,571.2"/><polygon points="1316.9,578.8 1346.3,571.8 1346.3,564.2 1316.9,571.2"/><polygon points="1316.9,571.2 1346.3,564.2 1321.6,552.2 1292.1,559.2"/></g>
<g fill="#8c0000" stroke="#000" stroke-width="2.25" stroke-linejoin="round"><polygon points="1287.4,599.5 1262.7,587.5 1262.7,573.7 1287.4,585.8"/><polygon points="1287.4,599.5 1311,593.9 1311,580.2 1287.4,585.8"/><polygon points="1287.4,585.8 1311,580.2 1286.2,568.1 1262.7,573.7"/></g>
<g fill="#8c0000" stroke="#000" stroke-width="2.25" stroke-linejoin="round"><polygon points="1287.4,585.8 1262.7,573.7 1262.7,566.2 1287.4,578.2"/><polygon points="1287.4,585.8 1316.9,578.8 1316.9,571.2 1287.4,578.2"/><polygon points="1287.4,578.2 1316.9,571.2 1292.1,559.2 1262.7,566.2"/></g>
<g fill="#8c0000" stroke="#000" stroke-width="2.25" stroke-linejoin="round"><polygon points="1252.1,607.9 1227.4,595.9 1227.4,582.2 1252.1,594.2"/><polygon points="1252.1,607.9 1275.6,602.3 1275.6,588.6 1252.1,594.2"/><polygon points="1252.1,594.2 1275.6,588.6 1250.9,576.6 1227.4,582.2"/></g>
<g fill="#8c0000" stroke="#000" stroke-width="2.25" stroke-linejoin="round"><polygon points="1246.2,595.6 1221.5,583.6 1221.5,576 1246.2,588.1"/><polygon points="1246.2,595.6 1275.6,588.6 1275.6,581.1 1246.2,588.1"/><polygon points="1246.2,588.1 1275.6,581.1 1250.9,569 1221.5,576"/></g>
<g fill="#920000" stroke="#000" stroke-width="2.25" stroke-linejoin="round"><polygon points="1216.7,616.3 1192,604.3 1192,590.6 1216.7,602.6"/><polygon points="1216.7,616.3 1240.3,610.7 1240.3,597 1216.7,602.6"/><polygon points="1216.7,602.6 1240.3,597 1215.6,585 1192,590.6"/></g>
<g fill="#920000" stroke="#000" stroke-width="2.25" stroke-linejoin="round"><polygon points="1216.7,602.6 1192,590.6 1192,583 1216.7,595.1"/><polygon points="1216.7,602.6 1246.2,595.6 1246.2,588.1 1216.7,595.1"/><polygon points="1216.7,595.1 1246.2,588.1 1221.5,576 1192,583"/></g>
<g fill="#e30000" stroke="#000" stroke-width="2.25" stroke-linejoin="round"><polygon points="1181.4,624.8 1156.7,612.7 1156.7,599 1181.4,611"/><polygon points="1181.4,624.8 1205,619.1 1205,605.4 1181.4,611"/><polygon points="1181.4,611 1205,605.4 1180.2,593.4 1156.7,599"/></g>
<g fill="#e30000" stroke="#000" stroke-width="2.25" stroke-linejoin="round"><polygon points="1175.5,612.4 1150.8,600.4 1150.8,592.8 1175.5,604.9"/><polygon points="1175.5,612.4 1205,605.4 1205,597.9 1175.5,604.9"/><polygon points="1175.5,604.9 1205,597.9 1180.2,585.8 1150.8,592.8"/></g>
<g fill="#f40000" stroke="#000" stroke-width="2.25" stroke-linejoin="round"><polygon points="1146.1,633.2 1121.4,621.1 1121.4,607.4 1146.1,619.4"/><polygon points="1146.1,633.2 1169.6,627.6 1169.6,613.8 1146.1,619.4"/><polygon points="1146.1,619.4 1169.6,613.8 1144.9,601.8 1121.4,607.4"/></g>
<g fill="#f40000" stroke="#000" stroke-width="2.25" stroke-linejoin="round"><polygon points="1146.1,619.4 1121.4,607.4 1121.4,599.8 1146.1,611.9"/><polygon points="1146.1,619.4 1175.5,612.4 1175.5,604.9 1146.1,611.9"/><polygon points="1146.1,611.9 1175.5,604.9 1150.8,592.8 1121.4,599.8"/></g>
<g fill="#ff8a00" stroke="#000" stroke-width="2.25" stroke-linejoin="round"><polygon points="1110.7,641.6 1086,629.5 1086,615.8 1110.7,627.8"/><polygon points="1110.7,641.6 1134.3,636 1134.3,622.2 1110.7,627.8"/><polygon points="1110.7,627.8 1134.3,622.2 1109.6,610.2 1086,615.8"/></g>
<g fill="#ff8a00" stroke="#000" stroke-width="2.25" stroke-linejoin="round"><polygon points="1104.8,629.2 1080.1,617.2 1080.1,609.6 1104.8,621.7"/><polygon points="1104.8,629.2 1134.3,622.2 1134.3,614.7 1104.8,621.7"/><polygon points="1104.8,621.7 1134.3,614.7 1109.6,602.6 1080.1,609.6"/></g>
<g fill="#ffa000" stroke="#000" stroke-width="2.25" stroke-linejoin="round"><polygon points="1075.4,650 1050.7,637.9 1050.7,624.2 1075.4,636.2"/><polygon points="1075.4,650 1099,644.4 1099,630.6 1075.4,636.2"/><polygon points="1075.4,636.2 1099,630.6 1074.2,618.6 1050.7,624.2"/></g>
<g fill="#ffa000" stroke="#000" stroke-width="2.25" stroke-linejoin="round"><polygon points="1075.4,636.2 1050.7,624.2 1050.7,616.6 1075.4,628.7"/><polygon points="1075.4,636.2 1104.8,629.2 1104.8,621.7 1075.4,628.7"/><polygon points="1075.4,628.7 1104.8,621.7 1080.1,609.6 1050.7,616.6"/></g>
<g fill="#aeff51" stroke="#000" stroke-width="2.25" stroke-linejoin="round"><polygon points="1040.1,658.4 1015.3,646.3 1015.3,632.6 1040.1,644.6"/><polygon points="1040.1,658.4 1063.6,652.8 1063.6,639 1040.1,644.6"/><polygon points="1040.1,644.6 1063.6,639 1038.9,627 1015.3,632.6"/></g>
<g fill="#aeff51" stroke="#000" stroke-width="2.25" stroke-linejoin="round"><polygon points="1034.2,646 1009.5,634 1009.5,626.4 1034.2,638.5"/><polygon points="1034.2,646 1063.6,639 1063.6,631.5 1034.2,638.5"/><polygon points="1034.2,638.5 1063.6,631.5 1038.9,619.4 1009.5,626.4"/></g>
<g fill="#8eff71" stroke="#000" stroke-width="2.25" stroke-linejoin="round"><polygon points="1004.7,666.8 980,654.7 980,641 1004.7,653"/><polygon points="1004.7,666.8 1028.3,661.2 1028.3,647.4 1004.7,653"/><polygon points="1004.7,653 1028.3,647.4 1003.6,635.4 980,641"/></g>
<g fill="#8eff71" stroke="#000" stroke-width="2.25" stroke-linejoin="round"><polygon points="1004.7,653 980,641 980,633.4 1004.7,645.5"/><polygon points="1004.7,653 1034.2,646 1034.2,638.5 1004.7,645.5"/><polygon points="1004.7,645.5 1034.2,638.5 1009.5,626.4 980,633.4"/></g>
<g fill="#0080ff" stroke="#000" stroke-width="2.25" stroke-linejoin="round"><polygon points="969.4,675.2 944.7,663.1 944.7,649.4 969.4,661.4"/><polygon points="969.4,675.2 992.9,669.6 992.9,655.8 969.4,661.4"/><polygon points="969.4,661.4 992.9,655.8 968.2,643.8 944.7,649.4"/></g>
<g fill="#0080ff" stroke="#000" stroke-width="2.25" stroke-linejoin="round"><polygon points="963.5,662.8 938.8,650.8 938.8,643.2 963.5,655.3"/><polygon points="963.5,662.8 992.9,655.8 992.9,648.3 963.5,655.3"/><polygon points="963.5,655.3 992.9,648.3 968.2,636.2 938.8,643.2"/></g>
<g fill="#005bff" stroke="#000" stroke-width="2.25" stroke-linejoin="round"><polygon points="934.1,683.6 909.3,671.5 909.3,657.8 934.1,669.8"/><polygon points="934.1,683.6 957.6,678 957.6,664.2 934.1,669.8"/><polygon points="934.1,669.8 957.6,664.2 932.9,652.2 909.3,657.8"/></g>
<g fill="#005bff" stroke="#000" stroke-width="2.25" stroke-linejoin="round"><polygon points="934.1,669.8 909.3,657.8 909.3,650.2 934.1,662.3"/><polygon points="934.1,669.8 963.5,662.8 963.5,655.3 934.1,662.3"/><polygon points="934.1,662.3 963.5,655.3 938.8,643.2 909.3,650.2"/></g>
<rect x="2102.4" y="1135.3" width="42.8" height="15.7" fill="#000080"/>
<rect x="2102.4" y="1120.3" width="42.8" height="15.7" fill="#000090"/>
<rect x="2102.4" y="1105.2" width="42.8" height="15.7" fill="#0000a0"/>
<rect x="2102.4" y="1090.1" width="42.8" height="15.7" fill="#0000b0"/>
<rect x="2102.4" y="1075.1" width="42.8" height="15.7" fill="#0000c0"/>
<rect x="2102.4" y="1060" width="42.8" height="15.7" fill="#0000d0"/>
<rect x="2102.4" y="1044.9" width="42.8" height="15.7" fill="#0000e1"/>
<rect x="2102.4" y="1029.9" width="42.8" height="15.7" fill="#0000f1"/>
<rect x="2102.4" y="1014.8" width="42.8" height="15.7" fill="#0002ff"/>
<rect x="2102.4" y="999.7" width="42.8" height="15.7" fill="#0012ff"/>
<rect x="2102.4" y="984.7" width="42.8" height="15.7" fill="#0022ff"/>
<rect x="2102.4" y="969.6" width="42.8" height="15.7" fill="#0033ff"/>
<rect x="2102.4" y="954.5" width="42.8" height="15.7" fill="#0043ff"/>
<rect x="2102.4" y="939.5" width="42.8" height="15.7" fill="#0053ff"/>
<rect x="2102.4" y="924.4" width="42.8" height="15.7" fill="#0063ff"/>
<rect x="2102.4" y="909.3" width="42.8" height="15.7" fill="#0073ff"/>
<rect x="2102.4" y="894.3" width="42.8" height="15.7" fill="#0084ff"/>
<rect x="2102.4" y="879.2" width="42.8" height="15.7" fill="#0094ff"/>
<rect x="2102.4" y="864.1" width="42.8" height="15.7" fill="#00a4ff"/>
<rect x="2102.4" y="849.1" width="42.8" height="15.7" fill="#00b4ff"/>
<rect x="2102.4" y="834" width="42.8" height="15.7" fill="#00c4ff"/>
<rect x="2102.4" y="818.9" width="42.8" height="15.7" fill="#00d4ff"/>
<rect x="2102.4" y="803.9" width="42.8" height="15.7" fill="#00e5ff"/>
<rect x="2102.4" y="788.8" width="42.8" height="15.7" fill="#00f5ff"/>
<rect x="2102.4" y="773.7" width="42.8" height="15.7" fill="#06fff9"/>
<rect x="2102.4" y="758.7" width="42.8" height="15.7" fill="#16ffe9"/>
<rect x="2102.4" y="743.6" width="42.8" height="15.7" fill="#26ffd9"/>
<rect x="2102.4" y="728.5" width="42.8" height="15.7" fill="#37ffc8"/>
<rect x="2102.4" y="713.5" width="42.8" height="15.7" fill="#47ffb8"/>
<rect x="2102.4" y="698.4" width="42.8" height="15.7" fill="#57ffa8"/>
<rect x="2102.4" y="683.3" width="42.8" height="15.7" fill="#67ff98"/>
<rect x="2102.4" y="668.2" width="42.8" height="15.7" fill="#77ff88"/>
<rect x="2102.4" y="653.2" width="42.8" height="15.7" fill="#88ff77"/>
<rect x="2102.4" y="638.1" width="42.8" height="15.7" fill="#98ff67"/>
<rect x="2102.4" y="623" width="42.8" height="15.7" fill="#a8ff57"/>
<rect x="2102.4" y="608" width="42.8" height="15.7" fill="#b8ff47"/>
<rect x="2102.4" y="592.9" width="42.8" height="15.7" fill="#c8ff37"/>
<rect x="2102.4" y="577.8" width="42.8" height="15.7" fill="#d9ff26"/>
<rect x="2102.4" y="562.8" width="42.8" height="15.7" fill="#e9ff16"/>
<rect x="2102.4" y="547.7" width="42.8" height="15.7" fill="#f9ff06"/>
<rect x="2102.4" y="532.6" width="42.8" height="15.7" fill="#fff500"/>
<rect x="2102.4" y="517.6" width="42.8" height="15.7" fill="#ffe500"/>
<rect x="2102.4" y="502.5" width="42.8" height="15.7" fill="#ffd500"/>
<rect x="2102.4" y="487.4" width="42.8" height="15.7" fill="#ffc400"/>
<rect x="2102.4" y="472.4" width="42.8" height="15.7" fill="#ffb400"/>
<rect x="2102.4" y="457.3" width="42.8" height="15.7" fill="#ffa400"/>
<rect x="2102.4" y="442.2" width="42.8" height="15.7" fill="#ff9400"/>
<rect x="2102.4" y="427.2" width="42.8" height="15.7" fill="#ff8400"/>
<rect x="2102.4" y="412.1" width="42.8" height="15.7" fill="#ff7300"/>
<rect x="2102.4" y="397" width="42.8" height="15.7" fill="#ff6300"/>
<rect x="2102.4" y="382" width="42.8" height="15.7" fill="#ff5300"/>
<rect x="2102.4" y="366.9" width="42.8" height="15.7" fill="#ff4300"/>
<rect x="2102.4" y="351.8" width="42.8" height="15.7" fill="#ff3300"/>
<rect x="2102.4" y="336.8" width="42.8" height="15.7" fill="#ff2200"/>
<rect x="2102.4" y="321.7" width="42.8" height="15.7" fill="#ff1200"/>
<rect x="2102.4" y="306.6" width="42.8" height="15.7" fill="#ff0200"/>
<rect x="2102.4" y="291.6" width="42.8" height="15.7" fill="#f10000"/>
<rect x="2102.4" y="276.5" width="42.8" height="15.7" fill="#e10000"/>
<rect x="2102.4" y="261.4" width="42.8" height="15.7" fill="#d00000"/>
<rect x="2102.4" y="246.4" width="42.8" height="15.7" fill="#c00000"/>
<rect x="2102.4" y="231.3" width="42.8" height="15.7" fill="#b00000"/>
<rect x="2102.4" y="216.2" width="42.8" height="15.7" fill="#a00000"/>
<rect x="2102.4" y="201.2" width="42.8" height="15.7" fill="#900000"/>
<rect x="2102.4" y="186.1" width="42.8" height="15.7" fill="#800000"/>
<rect x="2102.4" y="186.4" width="42.8" height="964.3" fill="none" stroke="#262626" stroke-opacity="0.8" stroke-width="1.3"/>
<line x1="2102.4" y1="1017.2" x2="2110.9" y2="1017.2" stroke="#262626" stroke-width="1.3"/>
<line x1="2102.4" y1="904.3" x2="2110.9" y2="904.3" stroke="#262626" stroke-width="1.3"/>
<line x1="2102.4" y1="791.4" x2="2110.9" y2="791.4" stroke="#262626" stroke-width="1.3"/>
<line x1="2102.4" y1="678.6" x2="2110.9" y2="678.6" stroke="#262626" stroke-width="1.3"/>
<line x1="2102.4" y1="565.7" x2="2110.9" y2="565.7" stroke="#262626" stroke-width="1.3"/>
<line x1="2102.4" y1="452.9" x2="2110.9" y2="452.9" stroke="#262626" stroke-width="1.3"/>
<line x1="2102.4" y1="340" x2="2110.9" y2="340" stroke="#262626" stroke-width="1.3"/>
<line x1="2102.4" y1="227.1" x2="2110.9" y2="227.1" stroke="#262626" stroke-width="1.3"/>
<g font-family="Liberation Sans" font-size="24.3" fill="#262626"><text x="2090" y="1028.7" text-anchor="end">720</text><text x="2090" y="915.8" text-anchor="end">740</text><text x="2090" y="802.9" text-anchor="end">760</text><text x="2090" y="690.1" text-anchor="end">780</text><text x="2090" y="577.2" text-anchor="end">800</text><text x="2090" y="464.4" text-anchor="end">820</text><text x="2090" y="351.5" text-anchor="end">840</text><text x="2090" y="238.6" text-anchor="end">860</text><text x="2090" y="197.7" text-anchor="end">867.2199</text><text x="2090" y="1161.7" text-anchor="end">696.3366</text></g>
<text x="0" y="0" text-anchor="middle" font-family="Liberation Sans" font-weight="bold" font-size="28.4" fill="#000" transform="translate(1165.6 338.6) scale(1.043 1)">surface: Temperature, T, Time = 7200</text>
<g stroke-width="3" stroke-linecap="round" fill="none">
<line x1="258.9" y1="1078.8" x2="313" y2="1059.5" stroke="#f00"/>
<line x1="258.9" y1="1078.8" x2="218" y2="1053.5" stroke="#0f0"/>
<line x1="258.9" y1="1078.8" x2="258.9" y2="1026" stroke="#00f"/>
</g>
<polygon points="258.9,1024 254,1033.5 263.8,1033.5" fill="#00f"/>
<polygon points="216.5,1052.6 226.5,1054.8 222.5,1060.5" fill="#0f0"/>
<polygon points="314,1059 303.5,1058.3 306.3,1064.3" fill="#f00"/>
<circle cx="258.9" cy="1078.8" r="2.2" fill="#777"/></svg>

<div class="a" style="left:164px;top:1178px;width:2004px;height:1px;background:#b4b4b4"></div>
<div class="a" style="left:164px;top:1180px;width:2004px;height:14px;background:#cdcdcd"></div>
<div class="a" style="left:164px;top:1194px;width:2004px;height:1px;background:#fdfdfd"></div>
<div class="a" style="left:164px;top:1201px;width:2004px;height:1px;background:#c0c0c0"></div>
<div class="a" style="left:1114.5px;top:1180.5px;width:99.5px;height:13px;box-sizing:border-box;background:#979797;border-top:1.5px solid #fff;border-left:1.5px solid #fff;border-right:1.5px solid #6a6a6a"></div>
<div class="a" style="left:164px;top:1202px;width:2004px;height:315px;background:#f0f0f0"></div>
<div class="a" style="left:165px;top:1203px;width:2px;height:314px;background:#8a8f96"></div>
<div class="a" style="left:167px;top:1203px;width:1909px;height:42px;background:#c6dcfb"></div>
<div class="a" style="left:165px;top:1245px;width:1912px;height:2px;background:#7d8692"></div>
<div class="a htx" style="left:183px;top:1209px">Command Log</div>
<div class="a" style="left:2076px;top:1203px;width:2px;height:314px;background:#8a8f96"></div>
<div class="a" style="left:2078px;top:1204px;width:87px;height:43px;box-sizing:border-box;background:#cce4f7;border:2px solid #0b5aa0;font-size:27px;text-align:center;line-height:38px;color:#000">&lt;&lt;</div>
<div class="a" style="left:2165px;top:1203px;width:3px;height:314px;background:#8a8f96"></div>
<div class="a" style="left:167px;top:1247px;width:1874px;height:266px;background:#e6e6e6;overflow:hidden">
<div class="a mono lg" style="top:-7.8px">&#160;t-asm_f&#160;:&#160;1.7e-01&#160;\&#160;&#160;&#160;0%</div><div class="a mono lg" style="top:26.9px">&#160;t-bdr&#160;&#160;&#160;:&#160;2.4e+00&#160;\&#160;&#160;&#160;0%</div><div class="a mono lg" style="top:61.6px">&#160;t-lc_mv&#160;:&#160;1.9e+00&#160;\&#160;&#160;&#160;0%</div><div class="a mono lg" style="top:96.3px">&#160;t-sol&#160;&#160;&#160;:&#160;2.4e+02&#160;\&#160;&#160;95%</div><div class="a mono lg" style="top:131.0px">&#160;t-tot&#160;&#160;&#160;:&#160;2.4e+02&#160;\&#160;100%</div><div class="a mono lg" style="top:165.7px">--------------------------------------------------</div><div class="a mono lg" style="top:200.4px"></div>
<div class="a" style="left:0;top:231px;width:1874px;height:35px;background:#0078d7"></div>
<div class="a mono lg" style="top:234.2px;color:#fff">Evaluation&#160;result&#160;of&#160;&quot;Temperature,&#160;T&quot;&#160;at&#160;(0.1425,0.075,0.05):&#160;866.607</div>
</div>
<div class="a" style="left:165px;top:1513px;width:2003px;height:4px;background:#8a8f96"></div>
<div class="a" style="left:2041px;top:1247px;width:35px;height:266px;background:#f0f0f0"></div>
<div class="a" style="left:2043px;top:1463px;width:31.5px;height:13.5px;background:#cdcdcd"></div>
<svg class="a" style="left:2041px;top:1247px" width="35" height="266">
<path d="M11.5 25.5 L18.3 18.7 L25.1 25.5" fill="none" stroke="#5a5a5a" stroke-width="3"/>
<path d="M11.5 242.5 L18.3 249.3 L25.1 242.5" fill="none" stroke="#5a5a5a" stroke-width="3"/>
</svg>
<div class="a" style="left:2078px;top:1247px;width:87px;height:266px;background:#f0f0f0"></div>
<div class="a" style="left:2078px;top:1247px;width:52.5px;height:229px;background:#e6e6e6;overflow:hidden">
<div class="a mono" style="left:18px;top:41px;font-size:26.8px;line-height:34.7px;color:#7a7a7a;white-space:pre"><i>Tip</i><br>the<br>wit<br>rep</div>
</div>
<svg class="a" style="left:2130px;top:1247px" width="35" height="266">
<path d="M12 25.5 L18.8 18.7 L25.6 25.5" fill="none" stroke="#c4c4c4" stroke-width="3"/>
<path d="M12 208 L18.8 214.8 L25.6 208" fill="none" stroke="#c4c4c4" stroke-width="3"/>
</svg>
<svg class="a" style="left:2078px;top:1476px" width="87" height="37">
<path d="M15.5 11.5 L10 17.5 L15.5 23.5" fill="none" stroke="#c4c4c4" stroke-width="2"/>
<path d="M37.5 11.5 L43 17.5 L37.5 23.5" fill="none" stroke="#c4c4c4" stroke-width="2"/>
</svg>

<div class="a" style="left:0;top:60px;width:1px;height:1457px;background:#56616e;z-index:5"></div>
<div class="a" style="left:0;top:1516px;width:2172px;height:1px;background:#5d6773"></div>
</body></html>
